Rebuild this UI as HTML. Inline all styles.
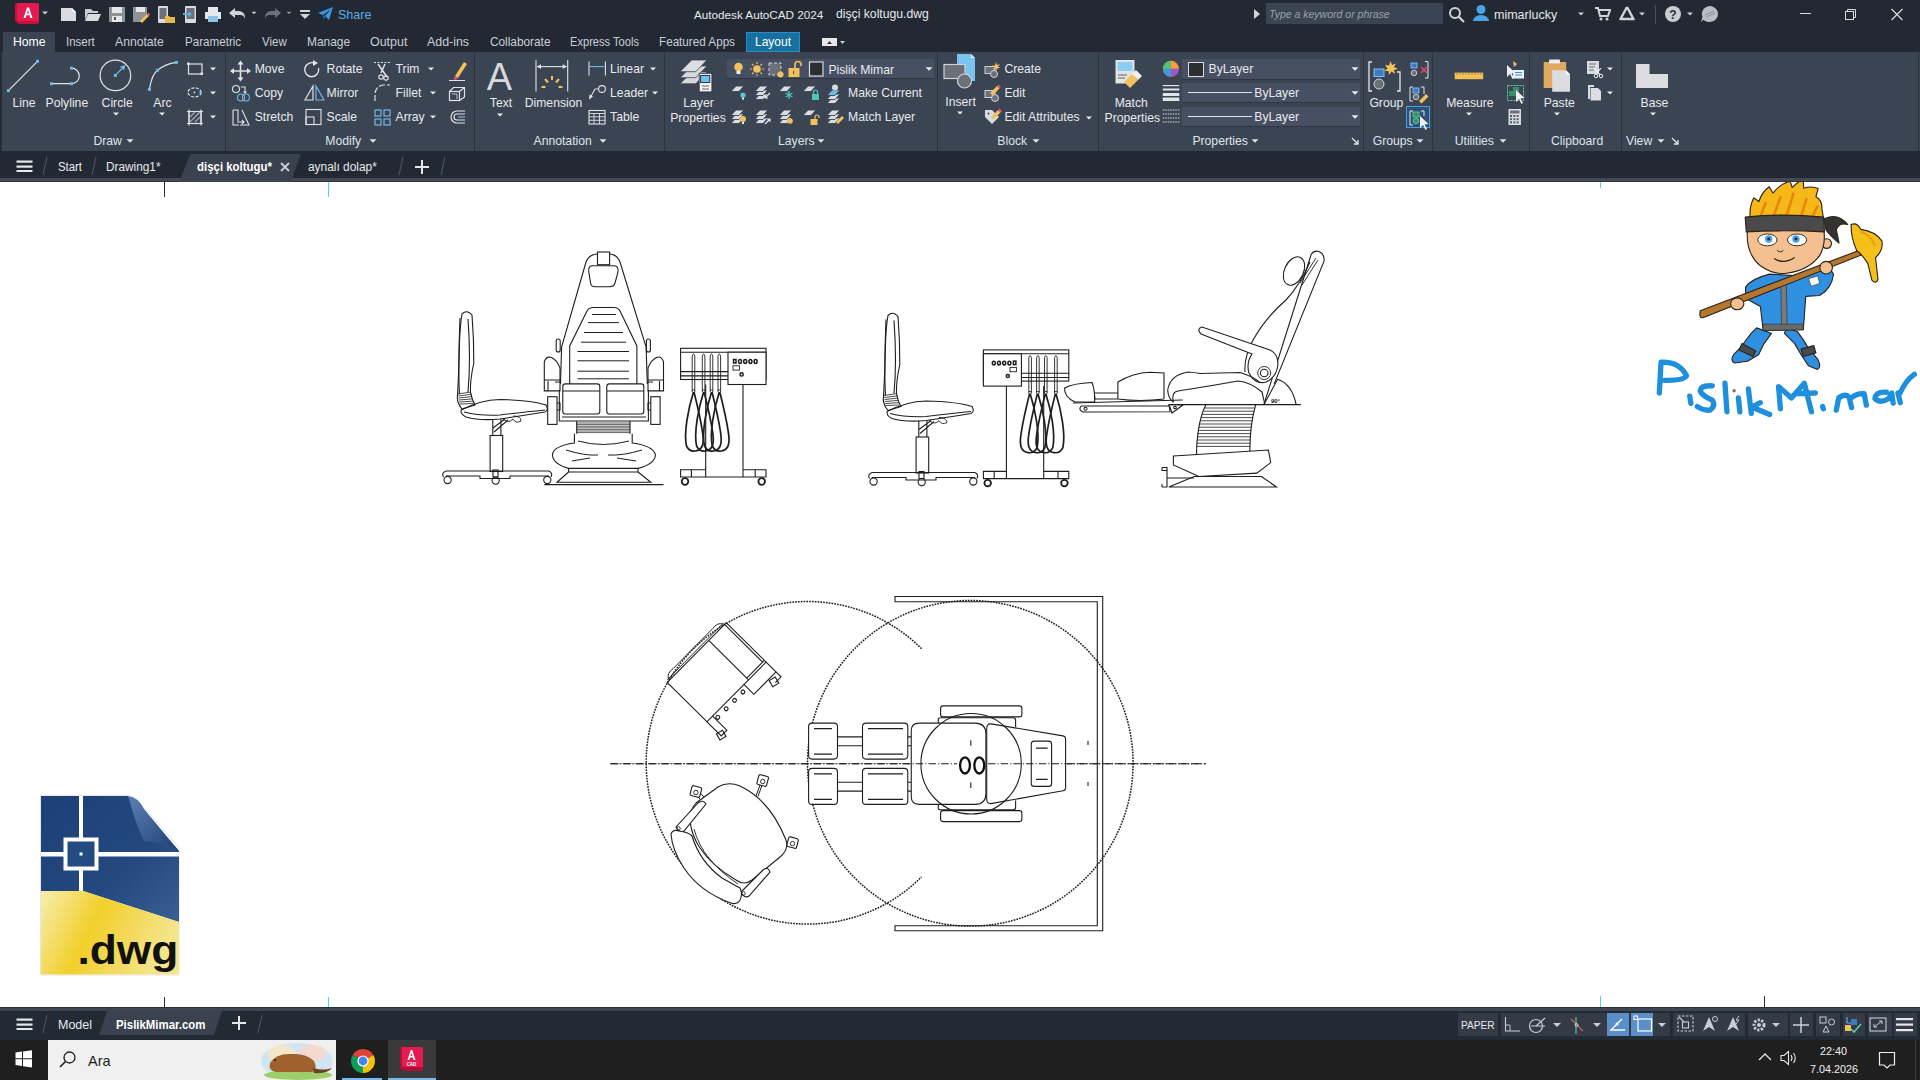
<!DOCTYPE html>
<html><head><meta charset="utf-8">
<style>
*{margin:0;padding:0;box-sizing:border-box}
html,body{width:1920px;height:1080px;overflow:hidden;background:#fff;font-family:"Liberation Sans",sans-serif}
.a{position:absolute;display:block}
.t{position:absolute;white-space:nowrap}
</style></head>
<body>
<div class="a" style="left:0px;top:0px;width:1920px;height:29px;background:#222933;"></div>
<div class="a" style="left:0px;top:29px;width:1920px;height:23px;background:#222933;"></div>
<div class="a" style="left:0px;top:52px;width:1920px;height:99px;background:#3b4453;"></div>
<div class="a" style="left:0px;top:151px;width:1920px;height:27px;background:#222933;"></div>
<div class="a" style="left:0px;top:178px;width:1920px;height:3px;background:#444a54;"></div>
<div class="a" style="left:0px;top:181px;width:1920px;height:1px;background:#30353e;"></div>
<div class="a" style="left:0px;top:182px;width:1920px;height:825px;background:#ffffff;"></div>
<div class="a" style="left:0px;top:1007px;width:1920px;height:1px;background:#2a303a;"></div>
<div class="a" style="left:0px;top:1008px;width:1920px;height:3px;background:#3f4551;"></div>
<div class="a" style="left:0px;top:1011px;width:1920px;height:29px;background:#222a33;"></div>
<div class="a" style="left:0px;top:1040px;width:1920px;height:40px;background:#1f1f1f;"></div>
<svg class="a" style="left:14px;top:2px;" width="26" height="24" viewBox="0 0 26 24"><path d="M3 1 H23 a2 2 0 0 1 2 2 V20 a2 2 0 0 1 -2 2 H5 L1 19 V3 a2 2 0 0 1 2 -2z" fill="#c8103f"/><path d="M3 1 H23 a2 2 0 0 1 2 2 V19 H5 a2 2 0 0 1 -2 -2z" fill="#e51a52"/><path d="M9.5 16 L13 5.5 H15 L18.5 16 H16.3 L15.5 13.3 H12.4 L11.6 16z M13 11.4 H15 L14 8z" fill="#fff"/></svg>
<svg class="a" style="left:40px;top:9px;" width="10" height="8" viewBox="0 0 10 8"><path d="M2 2.5 L8 2.5 L5 5.5 Z" fill="#c8ccd3"/></svg>
<svg class="a" style="left:60px;top:7px;" width="18" height="15" viewBox="0 0 18 15"><path d="M1 1 H12 L16 5 V14 H1z" fill="#d9dbdf"/><path d="M12 1 L16 5 H12z" fill="#f3f4f6"/></svg>
<svg class="a" style="left:84px;top:7px;" width="18" height="15" viewBox="0 0 18 15"><path d="M1 2 H7 L9 4 H14 V6 H4 L1 13z" fill="#c8cbd0"/><path d="M4 7 H17 L14 14 H1z" fill="#d9dbdf"/></svg>
<svg class="a" style="left:108px;top:6px;" width="18" height="17" viewBox="0 0 18 17"><path d="M1 1 H17 V16 H1z" fill="#8e939b"/><rect x="4" y="1" width="10" height="6" fill="#e6e7ea"/><rect x="4" y="10" width="10" height="6" fill="#e6e7ea"/><rect x="6" y="11" width="2" height="3" fill="#555"/></svg>
<svg class="a" style="left:132px;top:6px;" width="18" height="17" viewBox="0 0 18 17"><path d="M1 1 H15 V10 L9 16 H1z" fill="#8e939b"/><rect x="4" y="1" width="9" height="5" fill="#e6e7ea"/><path d="M8 15 L15 8 L17 10 L10 17z" fill="#f2c15a"/><path d="M15 8 L16.5 6.5 L18 8 L17 10z" fill="#e0556a"/></svg>
<svg class="a" style="left:157px;top:5px;" width="20" height="19" viewBox="0 0 20 19"><rect x="1" y="1" width="10" height="17" rx="1" fill="#d9dbdf"/><rect x="2.5" y="3" width="7" height="11" fill="#6b7079"/><path d="M8 11 H12 L13 12 H18 V18 H8z" fill="#e8b84a"/></svg>
<svg class="a" style="left:182px;top:5px;" width="16" height="19" viewBox="0 0 16 19"><rect x="3" y="1" width="11" height="17" rx="1" fill="#d9dbdf"/><rect x="4.5" y="3" width="8" height="11" fill="#6b7079"/><path d="M1 8 H7 V6 L10 9 L7 12 V10 H1z" fill="#5ab0e6"/></svg>
<svg class="a" style="left:204px;top:6px;" width="18" height="17" viewBox="0 0 18 17"><rect x="4" y="1" width="10" height="5" fill="#e6e7ea"/><rect x="1" y="6" width="16" height="7" fill="#e6e7ea"/><rect x="4" y="10" width="10" height="6" fill="#8fc3ea"/></svg>
<svg class="a" style="left:228px;top:7px;" width="18" height="14" viewBox="0 0 18 14"><path d="M1 6 L7 1 V4 H11 a6 6 0 0 1 6 6 V12 a5 5 0 0 0 -5 -4 H7 V11z" fill="#d0d3d8"/></svg>
<svg class="a" style="left:249px;top:9px;" width="10" height="8" viewBox="0 0 10 8"><path d="M2.5 2.75 L7.5 2.75 L5 5.25 Z" fill="#c8ccd3"/></svg>
<svg class="a" style="left:264px;top:7px;" width="18" height="14" viewBox="0 0 18 14"><path d="M17 6 L11 1 V4 H7 a6 6 0 0 0 -6 6 V12 a5 5 0 0 1 5 -4 H11 V11z" fill="#6b717b"/></svg>
<svg class="a" style="left:284px;top:9px;" width="10" height="8" viewBox="0 0 10 8"><path d="M2.5 2.75 L7.5 2.75 L5 5.25 Z" fill="#8a9099"/></svg>
<svg class="a" style="left:299px;top:7px;" width="12" height="14" viewBox="0 0 12 14"><rect x="1" y="3" width="10" height="2" fill="#d0d3d8"/><path d="M1 7 H11 L6 12z" fill="#d0d3d8"/></svg>
<svg class="a" style="left:317px;top:6px;" width="17" height="15" viewBox="0 0 17 15"><path d="M1 7 L16 1 L12 14 L8 10 L14 3 L6 9z" fill="#3d9ae0"/><path d="M6 9 L8 10 L7 14z" fill="#2a78b8"/></svg>
<div class="t" style="left:338px;top:8.52px;font-size:12.5px;line-height:12.5px;color:#5aaee8;font-weight:normal;">Share</div>
<div class="t" style="left:694px;top:8.70px;font-size:11.7px;line-height:11.7px;color:#e6e8ec;font-weight:normal;">Autodesk AutoCAD 2024</div>
<div class="t" style="left:836px;top:8.27px;font-size:12.2px;line-height:12.2px;color:#e6e8ec;font-weight:normal;">dişçi koltugu.dwg</div>
<svg class="a" style="left:1252px;top:8px;" width="10" height="12" viewBox="0 0 10 12"><path d="M2 1 L8 6 L2 11z" fill="#d0d3d8"/></svg>
<div class="a" style="left:1266px;top:3px;width:177px;height:21px;background:#3b4453;"></div>
<div class="t" style="left:1269px;top:9.37px;font-size:11.5px;line-height:11.5px;color:#9aa1ab;font-weight:normal;font-style:italic;transform:scaleX(0.9137);transform-origin:0 0;">Type a keyword or phrase</div>
<svg class="a" style="left:1448px;top:6px;" width="18" height="17" viewBox="0 0 18 17"><circle cx="7" cy="7" r="5" fill="none" stroke="#d0d3d8" stroke-width="2"/><path d="M10.5 10.5 L16 16" stroke="#d0d3d8" stroke-width="2.2"/></svg>
<svg class="a" style="left:1472px;top:4px;" width="18" height="18" viewBox="0 0 18 18"><circle cx="9" cy="5.5" r="4.5" fill="#4aa3e6"/><path d="M1 17 a8 6 0 0 1 16 0z" fill="#4aa3e6"/></svg>
<div class="t" style="left:1494px;top:9.02px;font-size:12.5px;line-height:12.5px;color:#e6e8ec;font-weight:normal;">mimarlucky</div>
<svg class="a" style="left:1576px;top:10px;" width="10" height="8" viewBox="0 0 10 8"><path d="M2 2.5 L8 2.5 L5 5.5 Z" fill="#c8ccd3"/></svg>
<svg class="a" style="left:1594px;top:6px;" width="17" height="15" viewBox="0 0 17 15"><path d="M1 2 H4 L6 10 H14 L16 4 H5" fill="none" stroke="#d0d3d8" stroke-width="2"/><circle cx="7" cy="13" r="1.5" fill="#d0d3d8"/><circle cx="13" cy="13" r="1.5" fill="#d0d3d8"/></svg>
<svg class="a" style="left:1618px;top:5px;" width="18" height="17" viewBox="0 0 18 17"><path d="M9 2 L2 15 M9 2 L16 15 M3 14 H15" fill="none" stroke="#d0d3d8" stroke-width="2.4"/></svg>
<svg class="a" style="left:1637px;top:10px;" width="10" height="8" viewBox="0 0 10 8"><path d="M2 2.5 L8 2.5 L5 5.5 Z" fill="#c8ccd3"/></svg>
<div class="a" style="left:1655px;top:5px;width:1px;height:19px;background:#4a515c;"></div>
<svg class="a" style="left:1664px;top:5px;" width="18" height="18" viewBox="0 0 18 18"><circle cx="9" cy="9" r="8" fill="#c9ccd1"/><text x="9" y="14" font-size="12" font-family="Liberation Sans" font-weight="bold" text-anchor="middle" fill="#2a2f38">?</text></svg>
<svg class="a" style="left:1685px;top:10px;" width="10" height="8" viewBox="0 0 10 8"><path d="M2 2.5 L8 2.5 L5 5.5 Z" fill="#c8ccd3"/></svg>
<svg class="a" style="left:1700px;top:5px;" width="19" height="18" viewBox="0 0 19 18"><path d="M9.5 1 a8.5 8 0 1 1 -6 13.7 L1 17 L2.5 12 A8.5 8 0 0 1 9.5 1z" fill="#b9bdc4"/><path d="M5 10 L14 6 M6 12 L15 8" stroke="#8a8f97" stroke-width="1"/></svg>
<div class="a" style="left:1800px;top:13px;width:11px;height:1px;background:#d8dbe0;"></div>
<svg class="a" style="left:1844px;top:8px;" width="14" height="13" viewBox="0 0 14 13"><rect x="1.5" y="3.5" width="8" height="8" fill="none" stroke="#d8dbe0" stroke-width="1"/><path d="M3.5 3.5 V1.5 H11.5 V9.5 H9.5" fill="none" stroke="#d8dbe0" stroke-width="1"/></svg>
<svg class="a" style="left:1890px;top:8px;" width="14" height="13" viewBox="0 0 14 13"><path d="M1.5 1 L12.5 12 M12.5 1 L1.5 12" stroke="#d8dbe0" stroke-width="1.2"/></svg>
<div class="a" style="left:3px;top:32px;width:52px;height:20px;background:#3b4453;"></div>
<div class="t" style="left:13.3px;top:35.93px;font-size:12.6px;line-height:12.6px;color:#ffffff;font-weight:normal;transform:scaleX(0.9699);transform-origin:0 0;">Home</div>
<div class="t" style="left:66px;top:35.93px;font-size:12.6px;line-height:12.6px;color:#c9ced6;font-weight:normal;transform:scaleX(0.9107);transform-origin:0 0;">Insert</div>
<div class="t" style="left:115.4px;top:35.93px;font-size:12.6px;line-height:12.6px;color:#c9ced6;font-weight:normal;transform:scaleX(0.9674);transform-origin:0 0;">Annotate</div>
<div class="t" style="left:184.6px;top:35.93px;font-size:12.6px;line-height:12.6px;color:#c9ced6;font-weight:normal;transform:scaleX(0.9226);transform-origin:0 0;">Parametric</div>
<div class="t" style="left:261.5px;top:35.93px;font-size:12.6px;line-height:12.6px;color:#c9ced6;font-weight:normal;transform:scaleX(0.9120);transform-origin:0 0;">View</div>
<div class="t" style="left:306.7px;top:35.93px;font-size:12.6px;line-height:12.6px;color:#c9ced6;font-weight:normal;transform:scaleX(0.9465);transform-origin:0 0;">Manage</div>
<div class="t" style="left:369.7px;top:35.93px;font-size:12.6px;line-height:12.6px;color:#c9ced6;font-weight:normal;transform:scaleX(0.9888);transform-origin:0 0;">Output</div>
<div class="t" style="left:427px;top:35.93px;font-size:12.6px;line-height:12.6px;color:#c9ced6;font-weight:normal;transform:scaleX(0.9831);transform-origin:0 0;">Add-ins</div>
<div class="t" style="left:489.5px;top:35.93px;font-size:12.6px;line-height:12.6px;color:#c9ced6;font-weight:normal;transform:scaleX(0.9388);transform-origin:0 0;">Collaborate</div>
<div class="t" style="left:570px;top:35.93px;font-size:12.6px;line-height:12.6px;color:#c9ced6;font-weight:normal;transform:scaleX(0.8823);transform-origin:0 0;">Express Tools</div>
<div class="t" style="left:659px;top:35.93px;font-size:12.6px;line-height:12.6px;color:#c9ced6;font-weight:normal;transform:scaleX(0.9273);transform-origin:0 0;">Featured Apps</div>
<div class="a" style="left:746px;top:32px;width:54px;height:20px;background:#17709f;border:1px solid #2a8cc0;"></div>
<div class="t" style="left:755px;top:35.93px;font-size:12.6px;line-height:12.6px;color:#ffffff;font-weight:normal;transform:scaleX(0.9516);transform-origin:0 0;">Layout</div>
<svg class="a" style="left:821px;top:37px;" width="24" height="10" viewBox="0 0 24 10"><rect x="1" y="1" width="15" height="8" fill="#e8e8e8"/><path d="M6 7 L8.5 4 L11 7z" fill="#333"/><path d="M19 4 H24 L21.5 7z" fill="#c8ccd3"/></svg>
<div class="a" style="left:225px;top:52px;width:1px;height:99px;background:#2c333e;"></div>
<div class="a" style="left:474px;top:52px;width:1px;height:99px;background:#2c333e;"></div>
<div class="a" style="left:664px;top:52px;width:1px;height:99px;background:#2c333e;"></div>
<div class="a" style="left:937px;top:52px;width:1px;height:99px;background:#2c333e;"></div>
<div class="a" style="left:1098px;top:52px;width:1px;height:99px;background:#2c333e;"></div>
<div class="a" style="left:1363px;top:52px;width:1px;height:99px;background:#2c333e;"></div>
<div class="a" style="left:1432px;top:52px;width:1px;height:99px;background:#2c333e;"></div>
<div class="a" style="left:1529px;top:52px;width:1px;height:99px;background:#2c333e;"></div>
<div class="a" style="left:1621px;top:52px;width:1px;height:99px;background:#2c333e;"></div>
<div class="a" style="left:1918px;top:52px;width:1px;height:99px;background:#2c333e;"></div>
<div class="t" style="left:93.4px;top:135.07px;font-size:12.2px;line-height:12.2px;color:#dfe3ea;font-weight:normal;">Draw</div>
<svg class="a" style="left:125.30000000000001px;top:136.5px;" width="10" height="8" viewBox="0 0 10 8"><path d="M1.5 2.25 L8.5 2.25 L5 5.75 Z" fill="#dfe3ea"/></svg>
<div class="t" style="left:325.3px;top:134.77px;font-size:12.2px;line-height:12.2px;color:#dfe3ea;font-weight:normal;">Modify</div>
<svg class="a" style="left:367.8px;top:136.5px;" width="10" height="8" viewBox="0 0 10 8"><path d="M1.5 2.25 L8.5 2.25 L5 5.75 Z" fill="#dfe3ea"/></svg>
<div class="t" style="left:533.5px;top:134.97px;font-size:12.2px;line-height:12.2px;color:#dfe3ea;font-weight:normal;">Annotation</div>
<svg class="a" style="left:598.1px;top:136.5px;" width="10" height="8" viewBox="0 0 10 8"><path d="M1.5 2.25 L8.5 2.25 L5 5.75 Z" fill="#dfe3ea"/></svg>
<div class="t" style="left:778px;top:134.87px;font-size:12.2px;line-height:12.2px;color:#dfe3ea;font-weight:normal;">Layers</div>
<svg class="a" style="left:816px;top:136.5px;" width="10" height="8" viewBox="0 0 10 8"><path d="M1.5 2.25 L8.5 2.25 L5 5.75 Z" fill="#dfe3ea"/></svg>
<div class="t" style="left:997.3px;top:135.07px;font-size:12.2px;line-height:12.2px;color:#dfe3ea;font-weight:normal;">Block</div>
<svg class="a" style="left:1031.2px;top:136.5px;" width="10" height="8" viewBox="0 0 10 8"><path d="M1.5 2.25 L8.5 2.25 L5 5.75 Z" fill="#dfe3ea"/></svg>
<div class="t" style="left:1192.4px;top:134.87px;font-size:12.2px;line-height:12.2px;color:#dfe3ea;font-weight:normal;">Properties</div>
<svg class="a" style="left:1250.1px;top:136.5px;" width="10" height="8" viewBox="0 0 10 8"><path d="M1.5 2.25 L8.5 2.25 L5 5.75 Z" fill="#dfe3ea"/></svg>
<svg class="a" style="left:1350.3px;top:136px;" width="10" height="10" viewBox="0 0 10 10"><path d="M2 2 L8 8 M8 4 V8 H4" fill="none" stroke="#dfe3ea" stroke-width="1.3"/></svg>
<div class="t" style="left:1372.7px;top:134.57px;font-size:12.2px;line-height:12.2px;color:#dfe3ea;font-weight:normal;">Groups</div>
<svg class="a" style="left:1415px;top:136.5px;" width="10" height="8" viewBox="0 0 10 8"><path d="M1.5 2.25 L8.5 2.25 L5 5.75 Z" fill="#dfe3ea"/></svg>
<div class="t" style="left:1454.7px;top:134.57px;font-size:12.2px;line-height:12.2px;color:#dfe3ea;font-weight:normal;">Utilities</div>
<svg class="a" style="left:1497.9px;top:136.5px;" width="10" height="8" viewBox="0 0 10 8"><path d="M1.5 2.25 L8.5 2.25 L5 5.75 Z" fill="#dfe3ea"/></svg>
<div class="t" style="left:1551px;top:134.57px;font-size:12.2px;line-height:12.2px;color:#dfe3ea;font-weight:normal;">Clipboard</div>
<div class="t" style="left:1626px;top:134.57px;font-size:12.2px;line-height:12.2px;color:#dfe3ea;font-weight:normal;">View</div>
<svg class="a" style="left:1655.9px;top:136.5px;" width="10" height="8" viewBox="0 0 10 8"><path d="M1.5 2.25 L8.5 2.25 L5 5.75 Z" fill="#dfe3ea"/></svg>
<svg class="a" style="left:1669.5px;top:136px;" width="10" height="10" viewBox="0 0 10 10"><path d="M2 2 L8 8 M8 4 V8 H4" fill="none" stroke="#dfe3ea" stroke-width="1.3"/></svg>
<svg class="a" style="left:0px;top:52px;" width="225" height="80" viewBox="0 0 225 80"><path d="M8.4 38.6 L37.5 9.3" stroke="#e0e3e8" stroke-width="1.2"/><rect x="6.9" y="37.1" width="3" height="3" fill="#6bbbe9"/><rect x="36.0" y="7.800000000000001" width="3" height="3" fill="#6bbbe9"/><path d="M51.5 31.7 H71.5 M71.5 16.2 A7.75 7.75 0 0 1 71.5 31.7" fill="none" stroke="#e0e3e8" stroke-width="1.2"/><rect x="50.0" y="30.2" width="3" height="3" fill="#6bbbe9"/><rect x="70.0" y="30.2" width="3" height="3" fill="#6bbbe9"/><rect x="70.0" y="14.7" width="3" height="3" fill="#6bbbe9"/><circle cx="115.4" cy="23.4" r="15.3" fill="none" stroke="#e0e3e8" stroke-width="1.2"/><path d="M115.4 23.4 L124 14.5" stroke="#6bbbe9" stroke-width="1.2"/><path d="M125.5 13 L120 14.5 L124 18.5z" fill="#6bbbe9"/><rect x="113.9" y="21.9" width="3" height="3" fill="#6bbbe9"/><path d="M149.4 37.4 Q152 22 157.5 18.3 Q165 12 176.4 10.4" fill="none" stroke="#e0e3e8" stroke-width="1.2"/><rect x="147.9" y="35.9" width="3" height="3" fill="#6bbbe9"/><rect x="156.0" y="16.8" width="3" height="3" fill="#6bbbe9"/><rect x="174.9" y="8.9" width="3" height="3" fill="#6bbbe9"/><rect x="188.5" y="12" width="13.5" height="10" fill="none" stroke="#e0e3e8" stroke-width="1.2"/><rect x="187" y="10.5" width="2.5" height="2.5" fill="#e0e3e8"/><rect x="200.5" y="20.5" width="2.5" height="2.5" fill="#e0e3e8"/><ellipse cx="194.5" cy="40.4" rx="6.5" ry="4.6" fill="none" stroke="#e0e3e8" stroke-width="1.2" stroke-dasharray="3 1.5"/><circle cx="194.5" cy="40.4" r="0.9" fill="#e0e3e8"/><rect x="199.5" y="39.2" width="2.5" height="2.5" fill="#6bbbe9"/><rect x="189" y="59.5" width="12" height="12" fill="none" stroke="#e0e3e8" stroke-width="1.2"/><path d="M187 59.5 H203 M187 71.5 H203 M189 57.5 V73.5 M201 57.5 V73.5" stroke="#e0e3e8" stroke-width="1.2"/><path d="M190 65 L195 60 M190 70 L200 60 M195 70 L200 65" stroke="#9aa1ab" stroke-width="1.5"/></svg>
<div class="t" style="left:12.6px;top:97.37px;font-size:12.2px;line-height:12.2px;color:#e8eaee;font-weight:normal;">Line</div>
<div class="t" style="left:45.5px;top:97.37px;font-size:12.2px;line-height:12.2px;color:#e8eaee;font-weight:normal;">Polyline</div>
<div class="t" style="left:101.6px;top:97.37px;font-size:12.2px;line-height:12.2px;color:#e8eaee;font-weight:normal;">Circle</div>
<div class="t" style="left:153.3px;top:97.37px;font-size:12.2px;line-height:12.2px;color:#e8eaee;font-weight:normal;">Arc</div>
<svg class="a" style="left:110.6px;top:110px;" width="10" height="8" viewBox="0 0 10 8"><path d="M2 2.5 L8 2.5 L5 5.5 Z" fill="#e8eaee"/></svg>
<svg class="a" style="left:156.6px;top:110px;" width="10" height="8" viewBox="0 0 10 8"><path d="M2 2.5 L8 2.5 L5 5.5 Z" fill="#e8eaee"/></svg>
<svg class="a" style="left:207.6px;top:65.4px;" width="10" height="8" viewBox="0 0 10 8"><path d="M2 2.5 L8 2.5 L5 5.5 Z" fill="#e8eaee"/></svg>
<svg class="a" style="left:207.6px;top:89px;" width="10" height="8" viewBox="0 0 10 8"><path d="M2 2.5 L8 2.5 L5 5.5 Z" fill="#e8eaee"/></svg>
<svg class="a" style="left:207.6px;top:113px;" width="10" height="8" viewBox="0 0 10 8"><path d="M2 2.5 L8 2.5 L5 5.5 Z" fill="#e8eaee"/></svg>
<svg class="a" style="left:225px;top:52px;" width="250" height="80" viewBox="0 0 250 80"><path d="M15.5 10 V28 M6.5 19 H24.5" stroke="#e0e3e8" stroke-width="1.6"/><path d="M15.5 8.5 L12.5 12.5 H18.5z M15.5 29.5 L12.5 25.5 H18.5z M5 19 L9 16 V22z M26 19 L22 16 V22z" fill="#e0e3e8"/><path d="M90 11.5 A7 7 0 1 0 93.5 16" fill="none" stroke="#e0e3e8" stroke-width="1.4"/><path d="M88 8 L93 11 L88 14z" fill="#e0e3e8"/><path d="M149 10.5 H166" stroke="#e0e3e8" stroke-width="1.2" stroke-dasharray="2 1.5"/><path d="M153 12 L162 25 M160 12 L156 21" stroke="#e0e3e8" stroke-width="1.5"/><circle cx="156" cy="25" r="2.2" fill="none" stroke="#e0e3e8" stroke-width="1.2"/><circle cx="161" cy="26" r="2.2" fill="none" stroke="#e0e3e8" stroke-width="1.2"/><path d="M230 24 L239 10 L242 12 L233 26z" fill="#f2c15a"/><path d="M230 24 L233 26 L231 28 L228.5 27z" fill="#e0556a"/><path d="M224 28.5 H240" stroke="#e0e3e8" stroke-width="1"/><circle cx="11" cy="37" r="3.5" fill="none" stroke="#e0e3e8" stroke-width="1.1"/><path d="M16 35 H20 V41" fill="none" stroke="#e0e3e8" stroke-width="1.1"/><path d="M18 39.5 L20 42 L22 39.5z" fill="#e0e3e8"/><circle cx="16" cy="45.5" r="3.5" fill="none" stroke="#74b9e6" stroke-width="1.1"/><circle cx="21" cy="45.5" r="3.5" fill="none" stroke="#74b9e6" stroke-width="1.1"/><path d="M80 48 L88 34 V48z" fill="none" stroke="#e0e3e8" stroke-width="1.2"/><path d="M91 34 L99 48 H91z" fill="none" stroke="#74b9e6" stroke-width="1.2"/><path d="M150 49 V42 A9 9 0 0 1 159 33 H165" fill="none" stroke="#e0e3e8" stroke-width="1.2" stroke-dasharray="6 2"/><rect x="224.5" y="39.5" width="10" height="9" fill="none" stroke="#e0e3e8" stroke-width="1.2"/><path d="M224.5 39.5 L228.5 35.5 H239.5 V45 L234.5 48.5 M234.5 39.5 L239.5 35.5" fill="none" stroke="#e0e3e8" stroke-width="1.2"/><path d="M227 42 H232 V47" fill="none" stroke="#e0e3e8" stroke-width="0.8"/><path d="M8 58 V73 H14 M8 58 H13 V69 M17 58 L24 73 H15" fill="none" stroke="#e0e3e8" stroke-width="1.1"/><path d="M12 70 H19 M17 68 L19 70 L17 72" fill="none" stroke="#e0e3e8" stroke-width="1.1"/><rect x="81" y="57.5" width="15" height="15" fill="none" stroke="#e0e3e8" stroke-width="1.1"/><rect x="81" y="65" width="8" height="7.5" fill="none" stroke="#e0e3e8" stroke-width="1.1"/><rect x="150" y="58" width="6" height="6" fill="none" stroke="#74b9e6" stroke-width="1.2"/><rect x="159" y="58" width="6" height="6" fill="none" stroke="#74b9e6" stroke-width="1.2"/><rect x="150" y="67" width="6" height="6" fill="none" stroke="#74b9e6" stroke-width="1.2"/><rect x="159" y="67" width="6" height="6" fill="none" stroke="#74b9e6" stroke-width="1.2"/><path d="M240 59 H232 A6 6 0 0 0 232 71 H240 M240 62 H232 A3 3 0 0 0 232 68 H240" fill="none" stroke="#e0e3e8" stroke-width="1.2"/><path d="M240 65 H233" stroke="#74b9e6" stroke-width="1.2"/></svg>
<div class="t" style="left:254.7px;top:63.07px;font-size:12.2px;line-height:12.2px;color:#e8eaee;font-weight:normal;">Move</div>
<div class="t" style="left:326.6px;top:63.07px;font-size:12.2px;line-height:12.2px;color:#e8eaee;font-weight:normal;">Rotate</div>
<div class="t" style="left:395.6px;top:63.07px;font-size:12.2px;line-height:12.2px;color:#e8eaee;font-weight:normal;">Trim</div>
<div class="t" style="left:254.7px;top:87.17px;font-size:12.2px;line-height:12.2px;color:#e8eaee;font-weight:normal;">Copy</div>
<div class="t" style="left:326.6px;top:87.17px;font-size:12.2px;line-height:12.2px;color:#e8eaee;font-weight:normal;">Mirror</div>
<div class="t" style="left:395.6px;top:87.17px;font-size:12.2px;line-height:12.2px;color:#e8eaee;font-weight:normal;">Fillet</div>
<div class="t" style="left:254.7px;top:111.27px;font-size:12.2px;line-height:12.2px;color:#e8eaee;font-weight:normal;">Stretch</div>
<div class="t" style="left:326.6px;top:111.27px;font-size:12.2px;line-height:12.2px;color:#e8eaee;font-weight:normal;">Scale</div>
<div class="t" style="left:395.6px;top:111.27px;font-size:12.2px;line-height:12.2px;color:#e8eaee;font-weight:normal;">Array</div>
<svg class="a" style="left:426.4px;top:65.2px;" width="10" height="8" viewBox="0 0 10 8"><path d="M2 2.5 L8 2.5 L5 5.5 Z" fill="#e8eaee"/></svg>
<svg class="a" style="left:428.3px;top:89.2px;" width="10" height="8" viewBox="0 0 10 8"><path d="M2 2.5 L8 2.5 L5 5.5 Z" fill="#e8eaee"/></svg>
<svg class="a" style="left:428.3px;top:113.2px;" width="10" height="8" viewBox="0 0 10 8"><path d="M2 2.5 L8 2.5 L5 5.5 Z" fill="#e8eaee"/></svg>
<div class="a" style="left:0px;top:52px;width:1.5px;height:99px;background:#262c36;"></div>
<svg class="a" style="left:474px;top:52px;" width="190" height="80" viewBox="0 0 190 80"><text x="25.5" y="38" font-family="Liberation Sans" font-size="38" fill="#d6d9de" text-anchor="middle">A</text><path d="M62 8 V39.5 M93.7 8 V39.5" stroke="#e0e3e8" stroke-width="1.1"/><path d="M63 14.6 H92.7" stroke="#e0e3e8" stroke-width="1.1"/><path d="M63 14.6 L67 12.3 V16.9z M92.7 14.6 L88.7 12.3 V16.9z" fill="#e0e3e8"/><path d="M78 24 V28 M71 27 L74 30.5 M85 27 L82 30.5 M67.5 35 H71.5 M84.5 35 H88.5" stroke="#f2c15a" stroke-width="2"/><path d="M115 9.5 V23.5 M131.4 9.5 V23.5" stroke="#e0e3e8" stroke-width="1.1"/><path d="M116 14.6 H130.4" stroke="#6bbbe9" stroke-width="1.1"/><circle cx="128" cy="37" r="3.4" fill="none" stroke="#e0e3e8" stroke-width="1.1"/><path d="M124.6 37 H121 L116 46" fill="none" stroke="#e0e3e8" stroke-width="1.1"/><path d="M115 47.5 L115.5 42.5 L119 44.5z" fill="#e0e3e8"/><rect x="115" y="58.5" width="16" height="13.5" fill="none" stroke="#e0e3e8" stroke-width="1.1"/><path d="M115 61.5 H131 M115 64.8 H131 M115 68.3 H131 M120 61.5 V72 M125.5 61.5 V72" stroke="#e0e3e8" stroke-width="0.9"/></svg>
<div class="t" style="left:489.8px;top:96.97px;font-size:12.2px;line-height:12.2px;color:#e8eaee;font-weight:normal;">Text</div>
<div class="t" style="left:524.7px;top:96.97px;font-size:12.2px;line-height:12.2px;color:#e8eaee;font-weight:normal;">Dimension</div>
<svg class="a" style="left:494.7px;top:110.5px;" width="10" height="8" viewBox="0 0 10 8"><path d="M2 2.5 L8 2.5 L5 5.5 Z" fill="#e8eaee"/></svg>
<div class="t" style="left:610.1px;top:63.07px;font-size:12.2px;line-height:12.2px;color:#e8eaee;font-weight:normal;">Linear</div>
<div class="t" style="left:610.1px;top:87.07px;font-size:12.2px;line-height:12.2px;color:#e8eaee;font-weight:normal;">Leader</div>
<div class="t" style="left:610.1px;top:111.02px;font-size:12.2px;line-height:12.2px;color:#e8eaee;font-weight:normal;">Table</div>
<svg class="a" style="left:647.5px;top:65.2px;" width="10" height="8" viewBox="0 0 10 8"><path d="M2 2.5 L8 2.5 L5 5.5 Z" fill="#e8eaee"/></svg>
<svg class="a" style="left:650.4px;top:89px;" width="10" height="8" viewBox="0 0 10 8"><path d="M2 2.5 L8 2.5 L5 5.5 Z" fill="#e8eaee"/></svg>
<div class="a" style="left:727px;top:59px;width:207px;height:20px;background:#465062;border-bottom:1px solid #2f3642;border-radius:1px;"></div>
<svg class="a" style="left:664px;top:52px;" width="273" height="80" viewBox="0 0 273 80"><path d="M16 31.8 L27.7 20 H43 L31.8 31.8z" fill="#d6d8dc" stroke="#3b4453" stroke-width="0.8"/><path d="M16 25.7 L27.7 14 H43 L31.8 25.7z" fill="#d6d8dc" stroke="#3b4453" stroke-width="0.8"/><path d="M16 19.7 L27.7 8 H43 L31.8 19.7z" fill="#dcdee2" stroke="#3b4453" stroke-width="0.8"/><rect x="35.2" y="21.3" width="12.7" height="18.6" fill="#f2f2f2" stroke="#2a303a" stroke-width="0.8"/><rect x="36.6" y="23.4" width="9.2" height="7.1" fill="#6cc0f5" stroke="#223" stroke-width="0.9"/><path d="M38 34 H45 M38 37 H45" stroke="#555" stroke-width="0.9"/><circle cx="74.5" cy="15" r="4.3" fill="#f2c15a"/><rect x="72.5" y="19" width="4" height="3" fill="#eee"/><circle cx="93" cy="17" r="3.8" fill="#f2c15a"/><path d="M93 10 V12 M93 22 V24 M86 17 H88 M98 17 H100 M88 12 L89.5 13.5 M98 12 L96.5 13.5 M88 22 L89.5 20.5 M98 22 L96.5 20.5" stroke="#f2c15a" stroke-width="1.1"/><rect x="105" y="11" width="12" height="12" fill="#6b7079" stroke="#d0d3d8" stroke-width="1" stroke-dasharray="3 2"/><circle cx="116.5" cy="22.5" r="3" fill="#f2c15a"/><rect x="124.5" y="16" width="11" height="9" fill="#f2c15a"/><path d="M131 16 V12.5 a3 3 0 0 1 6 0 V14" fill="none" stroke="#f2c15a" stroke-width="1.6"/><rect x="129" y="19" width="1.2" height="3" fill="#555"/><rect x="145.5" y="10" width="13.5" height="14" fill="#2a2d31" stroke="#d8dbe0" stroke-width="1.2"/><path d="M72 34 H80 L75 39.5 H67z" fill="#d8dbe0" stroke="#3b4453" stroke-width="0.9"/><circle cx="79" cy="43" r="2.6" fill="#58c8d8"/><rect x="78" y="45.5" width="2" height="2" fill="#eee"/><path d="M96 42 H104 L99 47.5 H91z" fill="#d8dbe0" stroke="#3b4453" stroke-width="0.9"/><path d="M96 38 H104 L99 43.5 H91z" fill="#d8dbe0" stroke="#3b4453" stroke-width="0.9"/><path d="M96 34 H104 L99 39.5 H91z" fill="#d8dbe0" stroke="#3b4453" stroke-width="0.9"/><path d="M106 41 L101 46 M101 43 V46 H104" fill="none" stroke="#eee" stroke-width="1.1"/><path d="M120 34 H128 L123 39.5 H115z" fill="#d8dbe0" stroke="#3b4453" stroke-width="0.9"/><path d="M125 39 V47 M121.5 41 L128.5 45 M121.5 45 L128.5 41" stroke="#4fc4b8" stroke-width="1.4"/><path d="M144 34 H152 L147 39.5 H139z" fill="#d8dbe0" stroke="#3b4453" stroke-width="0.9"/><rect x="148" y="42" width="7" height="6" fill="#4fc4b8"/><path d="M149.5 42 V40 a2 2 0 0 1 4 0 V42" fill="none" stroke="#4fc4b8" stroke-width="1.2"/><path d="M168 46 H176 L171 51.5 H163z" fill="#d8dbe0" stroke="#3b4453" stroke-width="0.9"/><path d="M168 42 H176 L171 47.5 H163z" fill="#d8dbe0" stroke="#3b4453" stroke-width="0.9"/><path d="M168 38 H176 L171 43.5 H163z" fill="#6bbbe9" stroke="#3b4453" stroke-width="0.9"/><circle cx="171" cy="35.5" r="3" fill="#d8dbe0"/><path d="M72 66 H80 L75 71.5 H67z" fill="#d8dbe0" stroke="#3b4453" stroke-width="0.9"/><path d="M72 62 H80 L75 67.5 H67z" fill="#d8dbe0" stroke="#3b4453" stroke-width="0.9"/><path d="M72 58 H80 L75 63.5 H67z" fill="#d8dbe0" stroke="#3b4453" stroke-width="0.9"/><circle cx="79" cy="67" r="3" fill="#f2c15a"/><rect x="78" y="70" width="2" height="2" fill="#eee"/><path d="M96 66 H104 L99 71.5 H91z" fill="#d8dbe0" stroke="#3b4453" stroke-width="0.9"/><path d="M96 62 H104 L99 67.5 H91z" fill="#d8dbe0" stroke="#3b4453" stroke-width="0.9"/><path d="M96 58 H104 L99 63.5 H91z" fill="#d8dbe0" stroke="#3b4453" stroke-width="0.9"/><path d="M101 72 L106 67 M103 67 H106 V70" fill="none" stroke="#eee" stroke-width="1.1"/><path d="M120 66 H128 L123 71.5 H115z" fill="#d8dbe0" stroke="#3b4453" stroke-width="0.9"/><path d="M120 62 H128 L123 67.5 H115z" fill="#d8dbe0" stroke="#3b4453" stroke-width="0.9"/><path d="M120 58 H128 L123 63.5 H115z" fill="#d8dbe0" stroke="#3b4453" stroke-width="0.9"/><circle cx="126" cy="69" r="2.8" fill="#f2c15a"/><path d="M144 58 H152 L147 63.5 H139z" fill="#d8dbe0" stroke="#3b4453" stroke-width="0.9"/><rect x="146.5" y="67" width="7" height="6" fill="#f2c15a"/><path d="M151 67 V65 a2 2 0 0 1 4 0 V66" fill="none" stroke="#f2c15a" stroke-width="1.2"/><path d="M168 66 H176 L171 71.5 H163z" fill="#d8dbe0" stroke="#3b4453" stroke-width="0.9"/><path d="M168 62 H176 L171 67.5 H163z" fill="#d8dbe0" stroke="#3b4453" stroke-width="0.9"/><path d="M168 58 H176 L171 63.5 H163z" fill="#d8dbe0" stroke="#3b4453" stroke-width="0.9"/><path d="M172 70 L178 64 L180 66 L174 72z" fill="#f2c15a"/></svg>
<div class="t" style="left:828.4px;top:64.17px;font-size:12.2px;line-height:12.2px;color:#e8eaee;font-weight:normal;">Pislik Mimar</div>
<svg class="a" style="left:924px;top:64.8px;" width="10" height="8" viewBox="0 0 10 8"><path d="M1.5 2.25 L8.5 2.25 L5 5.75 Z" fill="#e8eaee"/></svg>
<div class="t" style="left:683.3px;top:96.97px;font-size:12.2px;line-height:12.2px;color:#e8eaee;font-weight:normal;">Layer</div>
<div class="t" style="left:670.2px;top:111.57px;font-size:12.2px;line-height:12.2px;color:#e8eaee;font-weight:normal;">Properties</div>
<div class="t" style="left:848.1px;top:86.77px;font-size:12.2px;line-height:12.2px;color:#e8eaee;font-weight:normal;">Make Current</div>
<div class="t" style="left:848.1px;top:110.77px;font-size:12.2px;line-height:12.2px;color:#e8eaee;font-weight:normal;">Match Layer</div>
<svg class="a" style="left:937px;top:52px;" width="426" height="80" viewBox="0 0 426 80"><path d="M20 2 H34 L38 6 V29 H20z" fill="#7cc3f0"/><path d="M34 2 L38 6 H34z" fill="#d8ecfa"/><rect x="7" y="12.5" width="21" height="14" fill="#6b7079" stroke="#d0d3d8" stroke-width="1.2"/><circle cx="27.5" cy="29" r="7" fill="#6b7079" stroke="#d0d3d8" stroke-width="1.2"/><rect x="48" y="14.5" width="10" height="7" fill="#6b7079" stroke="#d0d3d8" stroke-width="1"/><circle cx="57" cy="22" r="3.5" fill="#6b7079" stroke="#d0d3d8" stroke-width="1"/><path d="M59 10 L60 13 L63 12 L61 14.5 L63.5 16 L60.5 16 L60 19 L58.5 16.5 L56 18 L57.5 15 L55 13.5 L58 13.5z" fill="#f2c15a"/><rect x="48" y="38.5" width="10" height="7" fill="#6b7079" stroke="#d0d3d8" stroke-width="1"/><circle cx="58" cy="46" r="3.5" fill="#6b7079" stroke="#d0d3d8" stroke-width="1"/><path d="M53 41 L60 34 L62.5 36.5 L55.5 43.5z" fill="#f2c15a"/><path d="M60 34 L61.5 32.5 L64 35 L62.5 36.5z" fill="#e0556a"/><path d="M48 58 H55 L62 65 L55 72 L48 65z" fill="#d8dbe0"/><circle cx="51.5" cy="61.5" r="1" fill="#3b4453"/><path d="M54 65 L61 58 L63.5 60.5 L56.5 67.5z" fill="#f2c15a"/><path d="M61 58 L62.5 56.5 L65 59 L63.5 60.5z" fill="#e0556a"/><rect x="178.5" y="8" width="19" height="23.5" fill="#e2e3e6"/><rect x="180.5" y="10" width="15" height="9" fill="#8ccdf2"/><path d="M181 23 H190 M181 26 H188" stroke="#555" stroke-width="0.9"/><path d="M187 30 L195 22 L201 28 L193 36z" fill="#f2c15a"/><path d="M195 22 L199 18 L205 24 L201 28z" fill="#eee"/><circle cx="233.8" cy="16.8" r="8" fill="#e8475c"/><path d="M233.8 16.8 L233.8 8.8 A8 8 0 0 1 241.8 16.8z" fill="#f5a23a"/><path d="M233.8 16.8 L241.8 16.8 A8 8 0 0 1 233.8 24.8z" fill="#9b59d0"/><path d="M233.8 16.8 L233.8 24.8 A8 8 0 0 1 225.8 16.8z" fill="#3f9be0"/><path d="M233.8 16.8 L225.8 16.8 A8 8 0 0 1 233.8 8.8z" fill="#52c47a"/><rect x="225.8" y="33" width="16.5" height="1.2" fill="#e0e3e8"/><rect x="225.8" y="36.5" width="16.5" height="2" fill="#e0e3e8"/><rect x="225.8" y="41" width="16.5" height="3" fill="#e0e3e8"/><rect x="225.8" y="45.5" width="16.5" height="3.5" fill="#e0e3e8"/><path d="M225.8 58 H242.3 M225.8 62 H242.3 M225.8 66 H242.3 M225.8 70 H242.3" stroke="#e0e3e8" stroke-width="1.2" stroke-dasharray="1.5 1"/></svg>
<div class="t" style="left:945.3px;top:96.17px;font-size:12.2px;line-height:12.2px;color:#e8eaee;font-weight:normal;">Insert</div>
<svg class="a" style="left:954.6px;top:109.4px;" width="10" height="8" viewBox="0 0 10 8"><path d="M2 2.5 L8 2.5 L5 5.5 Z" fill="#e8eaee"/></svg>
<div class="t" style="left:1004.4px;top:62.87px;font-size:12.2px;line-height:12.2px;color:#e8eaee;font-weight:normal;">Create</div>
<div class="t" style="left:1004.4px;top:87.27px;font-size:12.2px;line-height:12.2px;color:#e8eaee;font-weight:normal;">Edit</div>
<div class="t" style="left:1004.4px;top:111.17px;font-size:12.2px;line-height:12.2px;color:#e8eaee;font-weight:normal;">Edit Attributes</div>
<svg class="a" style="left:1084.2px;top:113.5px;" width="10" height="8" viewBox="0 0 10 8"><path d="M2 2.5 L8 2.5 L5 5.5 Z" fill="#e8eaee"/></svg>
<div class="t" style="left:1114.7px;top:96.97px;font-size:12.2px;line-height:12.2px;color:#e8eaee;font-weight:normal;">Match</div>
<div class="t" style="left:1104.5px;top:111.57px;font-size:12.2px;line-height:12.2px;color:#e8eaee;font-weight:normal;">Properties</div>
<div class="a" style="left:1181.8px;top:59px;width:178.3px;height:20.5px;background:#465062;border-bottom:1px solid #2f3642;"></div>
<div class="a" style="left:1181.8px;top:82.5px;width:178.3px;height:20.5px;background:#465062;border-bottom:1px solid #2f3642;"></div>
<div class="a" style="left:1181.8px;top:106.5px;width:178.3px;height:20.5px;background:#465062;border-bottom:1px solid #2f3642;"></div>
<div class="a" style="left:1188px;top:61.5px;width:15.5px;height:15.5px;background:#2a2d31;border:1.2px solid #d8dbe0;"></div>
<div class="t" style="left:1208.5px;top:62.67px;font-size:12.2px;line-height:12.2px;color:#e8eaee;font-weight:normal;">ByLayer</div>
<div class="a" style="left:1188.3px;top:92px;width:63.5px;height:1px;background:#e0e3e8;"></div>
<div class="t" style="left:1254.3px;top:86.77px;font-size:12.2px;line-height:12.2px;color:#e8eaee;font-weight:normal;">ByLayer</div>
<div class="a" style="left:1188.3px;top:116.3px;width:63.5px;height:1px;background:#e0e3e8;"></div>
<div class="t" style="left:1254.3px;top:110.77px;font-size:12.2px;line-height:12.2px;color:#e8eaee;font-weight:normal;">ByLayer</div>
<svg class="a" style="left:1349.6px;top:64.8px;" width="10" height="8" viewBox="0 0 10 8"><path d="M1.5 2.25 L8.5 2.25 L5 5.75 Z" fill="#e8eaee"/></svg>
<svg class="a" style="left:1349.6px;top:88.9px;" width="10" height="8" viewBox="0 0 10 8"><path d="M1.5 2.25 L8.5 2.25 L5 5.75 Z" fill="#e8eaee"/></svg>
<svg class="a" style="left:1349.6px;top:112.9px;" width="10" height="8" viewBox="0 0 10 8"><path d="M1.5 2.25 L8.5 2.25 L5 5.75 Z" fill="#e8eaee"/></svg>
<div class="a" style="left:1406px;top:106px;width:24px;height:22px;background:#2f4f75;border:1px solid #4a9fe0;"></div>
<svg class="a" style="left:1363px;top:52px;" width="320" height="80" viewBox="0 0 320 80"><path d="M9 10 H6 V39 H9 M34 20 H37 V39 H34" fill="none" stroke="#e6e8ec" stroke-width="1.3"/><rect x="11" y="17" width="10" height="7.5" fill="#3e7bbf" stroke="#7cc3f0" stroke-width="1"/><circle cx="16" cy="32" r="5" fill="#6b7079" stroke="#d0d3d8" stroke-width="1"/><path d="M27.5 9 L29 13 L33 11.5 L31 15 L35 17 L31 18 L32 22 L28.5 19.5 L26 23 L25.5 19 L21.5 19 L24.5 16.5 L22 13 L26 13.5z" fill="#f2c15a"/><path d="M62 9.5 H65 V26 H62" fill="none" stroke="#e6e8ec" stroke-width="1"/><rect x="48" y="11" width="6" height="5" fill="#3e7bbf" stroke="#7cc3f0" stroke-width="0.9"/><circle cx="51" cy="21" r="2.8" fill="#6b7079" stroke="#d0d3d8" stroke-width="0.9"/><path d="M58 15 L64 21 M64 15 L58 21" stroke="#e8475c" stroke-width="1.6"/><path d="M50 35 H47 V49 H50 M58 35 H61 V42" fill="none" stroke="#e6e8ec" stroke-width="1"/><rect x="50" y="36" width="6" height="5" fill="#3e7bbf" stroke="#7cc3f0" stroke-width="0.9"/><circle cx="53" cy="45" r="2.8" fill="#6b7079" stroke="#d0d3d8" stroke-width="0.9"/><path d="M56 49 L63 42 L65.5 44.5 L58.5 51.5z" fill="#f2c15a"/><path d="M50 59 H47 V73 H50 M58 59 H61 V64" fill="none" stroke="#e6e8ec" stroke-width="1"/><rect x="50" y="60" width="6" height="5" fill="#3a8f68" stroke="#5ed0a0" stroke-width="0.9"/><circle cx="53" cy="69" r="2.8" fill="#3a8f68" stroke="#5ed0a0" stroke-width="0.9"/><path d="M57 64 L57 76 L60 73 L62.5 78 L64 77 L61.5 72.5 L65.5 72z" fill="#f0f0f0"/><rect x="91.7" y="20.6" width="28.5" height="6.6" fill="#f2c15a"/><path d="M94 20.6 V23 M97 20.6 V22.5 M100 20.6 V23 M103 20.6 V22.5 M106 20.6 V23 M109 20.6 V22.5 M112 20.6 V23 M115 20.6 V22.5 M118 20.6 V23" stroke="#8a6a20" stroke-width="0.7"/><path d="M144 13 L144 25 L147 22 L149.5 27 L151 26 L148.5 21.5 L152.5 21z" fill="#f0f0f0"/><rect x="150" y="18" width="11" height="8.5" fill="#e6f3fb"/><path d="M152 20.5 H159 M152 23 H159" stroke="#3e7bbf" stroke-width="0.9"/><path d="M150 9 L154 12 L151 15z" fill="#f2c15a"/><rect x="144.5" y="33.5" width="16" height="15" fill="none" stroke="#5ed0a0" stroke-width="1" stroke-dasharray="2 1"/><path d="M146 44 V39 H150 V35 H156 V44z" fill="#3a8f68"/><path d="M153 38 L153 50 L156 47 L158.5 52 L160 51 L157.5 46.5 L161.5 46z" fill="#f0f0f0"/><rect x="145.5" y="57" width="12.5" height="16" fill="#d8dbe0"/><rect x="147" y="58.5" width="9.5" height="3" fill="#6b7079"/><rect x="147.0" y="63.0" width="2" height="2" fill="#555b65"/><rect x="147.0" y="66.2" width="2" height="2" fill="#555b65"/><rect x="147.0" y="69.4" width="2" height="2" fill="#555b65"/><rect x="150.3" y="63.0" width="2" height="2" fill="#555b65"/><rect x="150.3" y="66.2" width="2" height="2" fill="#555b65"/><rect x="150.3" y="69.4" width="2" height="2" fill="#555b65"/><rect x="153.6" y="63.0" width="2" height="2" fill="#555b65"/><rect x="153.6" y="66.2" width="2" height="2" fill="#555b65"/><rect x="153.6" y="69.4" width="2" height="2" fill="#555b65"/><rect x="180.7" y="10" width="22.5" height="26" fill="#e0a860"/><rect x="186" y="7.5" width="11" height="4" rx="1" fill="#eee"/><path d="M189.2 18.3 H203 L207 22.3 V39.8 H189.2z" fill="#dcdde0"/><path d="M203 18.3 L207 22.3 H203z" fill="#fff"/><path d="M224 9 H236 V22 H224z" fill="#d8dbe0"/><path d="M226 12 H233 M226 15 H232 M226 18 H231" stroke="#6b7079" stroke-width="1"/><path d="M231 16 L237 23 M238 16 L234 21" stroke="#eee" stroke-width="1.2"/><circle cx="233" cy="24" r="1.8" fill="none" stroke="#eee" stroke-width="1"/><circle cx="238" cy="24" r="1.8" fill="none" stroke="#eee" stroke-width="1"/><path d="M225 33 H231 V35 H227 V47 H225z" fill="#d8dbe0"/><path d="M227.5 36 H235 L238 39 V48.5 H227.5z" fill="#dcdde0"/><path d="M273 12 H286.5 V22 H305 V36 H273z" fill="#dcdde0"/></svg>
<div class="t" style="left:1369.4px;top:96.67px;font-size:12.2px;line-height:12.2px;color:#e8eaee;font-weight:normal;">Group</div>
<div class="t" style="left:1446.2px;top:97.07px;font-size:12.2px;line-height:12.2px;color:#e8eaee;font-weight:normal;">Measure</div>
<svg class="a" style="left:1463.5px;top:110px;" width="10" height="8" viewBox="0 0 10 8"><path d="M2 2.5 L8 2.5 L5 5.5 Z" fill="#e8eaee"/></svg>
<div class="t" style="left:1543.7px;top:97.07px;font-size:12.2px;line-height:12.2px;color:#e8eaee;font-weight:normal;">Paste</div>
<svg class="a" style="left:1552.3px;top:110px;" width="10" height="8" viewBox="0 0 10 8"><path d="M2 2.5 L8 2.5 L5 5.5 Z" fill="#e8eaee"/></svg>
<svg class="a" style="left:1605.3px;top:65.3px;" width="10" height="8" viewBox="0 0 10 8"><path d="M2 2.5 L8 2.5 L5 5.5 Z" fill="#e8eaee"/></svg>
<svg class="a" style="left:1605.3px;top:89.2px;" width="10" height="8" viewBox="0 0 10 8"><path d="M2 2.5 L8 2.5 L5 5.5 Z" fill="#e8eaee"/></svg>
<div class="t" style="left:1640.5px;top:97.07px;font-size:12.2px;line-height:12.2px;color:#e8eaee;font-weight:normal;">Base</div>
<svg class="a" style="left:1647.5px;top:110px;" width="10" height="8" viewBox="0 0 10 8"><path d="M2 2.5 L8 2.5 L5 5.5 Z" fill="#e8eaee"/></svg>
<svg class="a" style="left:15.5px;top:160px;" width="17" height="12" viewBox="0 0 17 12"><rect x="0.5" y="0.5" width="16" height="2.2" fill="#e6e8ec"/><rect x="0.5" y="5.5" width="16" height="2.2" fill="#e6e8ec"/><rect x="0.5" y="10" width="16" height="2.2" fill="#e6e8ec"/></svg>
<svg class="a" style="left:41px;top:157px;" width="8" height="18" viewBox="0 0 8 18"><path d="M6 0 L2 18" stroke="#4a525e" stroke-width="1.2"/></svg>
<div class="t" style="left:58px;top:160.52px;font-size:12.5px;line-height:12.5px;color:#e8eaee;font-weight:normal;transform:scaleX(0.9091);transform-origin:0 0;">Start</div>
<svg class="a" style="left:90px;top:157px;" width="8" height="18" viewBox="0 0 8 18"><path d="M6 0 L2 18" stroke="#4a525e" stroke-width="1.2"/></svg>
<div class="t" style="left:106.3px;top:160.52px;font-size:12.5px;line-height:12.5px;color:#e8eaee;font-weight:normal;transform:scaleX(0.9451);transform-origin:0 0;">Drawing1*</div>
<svg class="a" style="left:180px;top:154px;" width="122" height="28" viewBox="0 0 122 28"><path d="M10.4 0 H120.7 L112.4 24 V28 H0.6 V24z" fill="#3a424f"/></svg>
<div class="t" style="left:197.2px;top:160.52px;font-size:12.5px;line-height:12.5px;color:#ffffff;font-weight:bold;transform:scaleX(0.9152);transform-origin:0 0;">dişçi koltugu*</div>
<svg class="a" style="left:280px;top:162px;" width="10" height="10" viewBox="0 0 10 10"><path d="M1 1 L9 9 M9 1 L1 9" stroke="#c9ced6" stroke-width="1.8"/></svg>
<div class="t" style="left:308.2px;top:160.52px;font-size:12.5px;line-height:12.5px;color:#e8eaee;font-weight:normal;transform:scaleX(0.9519);transform-origin:0 0;">aynalı dolap*</div>
<svg class="a" style="left:397px;top:157px;" width="8" height="18" viewBox="0 0 8 18"><path d="M6 0 L2 18" stroke="#4a525e" stroke-width="1.2"/></svg>
<svg class="a" style="left:414px;top:159px;" width="16" height="16" viewBox="0 0 16 16"><path d="M8 1 V15 M1 8 H15" stroke="#e6e8ec" stroke-width="2"/></svg>
<svg class="a" style="left:439px;top:157px;" width="8" height="18" viewBox="0 0 8 18"><path d="M6 0 L2 18" stroke="#4a525e" stroke-width="1.2"/></svg>
<div class="a" style="left:164px;top:182px;width:1.2px;height:15px;background:#2a2a2a;"></div>
<div class="a" style="left:328px;top:182px;width:1.2px;height:15px;background:#4fd8d8;"></div>
<div class="a" style="left:1600px;top:182px;width:1.2px;height:6px;background:#4fd8d8;"></div>
<div class="a" style="left:164px;top:997px;width:1.2px;height:10px;background:#2a2a2a;"></div>
<div class="a" style="left:328px;top:997px;width:1.2px;height:10px;background:#4fd8d8;"></div>
<div class="a" style="left:1600px;top:996px;width:1.2px;height:11px;background:#4fd8d8;"></div>
<div class="a" style="left:1764px;top:996px;width:1.2px;height:11px;background:#2a2a2a;"></div>
<svg class="a" style="left:15.5px;top:1018px;" width="17" height="12" viewBox="0 0 17 12"><rect x="0.5" y="0.5" width="16" height="2.2" fill="#e6e8ec"/><rect x="0.5" y="5.5" width="16" height="2.2" fill="#e6e8ec"/><rect x="0.5" y="10" width="16" height="2.2" fill="#e6e8ec"/></svg>
<svg class="a" style="left:41px;top:1015px;" width="8" height="18" viewBox="0 0 8 18"><path d="M6 0 L2 18" stroke="#4a525e" stroke-width="1.2"/></svg>
<div class="t" style="left:58px;top:1018.52px;font-size:12.5px;line-height:12.5px;color:#e8eaee;font-weight:normal;transform:scaleX(0.9986);transform-origin:0 0;">Model</div>
<svg class="a" style="left:99px;top:1011px;" width="126" height="24" viewBox="0 0 126 24"><path d="M8 0 H123 L115 24 H0z" fill="#3a424f"/></svg>
<div class="t" style="left:116px;top:1018.52px;font-size:12.5px;line-height:12.5px;color:#ffffff;font-weight:bold;transform:scaleX(0.9136);transform-origin:0 0;">PislikMimar.com</div>
<svg class="a" style="left:231px;top:1015px;" width="16" height="16" viewBox="0 0 16 16"><path d="M8 1 V15 M1 8 H15" stroke="#e6e8ec" stroke-width="2"/></svg>
<svg class="a" style="left:256px;top:1015px;" width="8" height="18" viewBox="0 0 8 18"><path d="M6 0 L2 18" stroke="#4a525e" stroke-width="1.2"/></svg>
<div class="a" style="left:1458px;top:1013px;width:39.5px;height:23px;background:#343b47;"></div>
<div class="t" style="left:1461.3px;top:1019.67px;font-size:11.5px;line-height:11.5px;color:#e6e8ec;font-weight:normal;transform:scaleX(0.8837);transform-origin:0 0;">PAPER</div>
<div class="a" style="left:1501px;top:1013px;width:168.5px;height:23px;background:#343b47;"></div>
<svg class="a" style="left:1501px;top:1011px;" width="170" height="28" viewBox="0 0 170 28"><path d="M4.5 6 V20 H19" fill="none" stroke="#c9ced6" stroke-width="1.1"/><path d="M4.5 14 H9 V20" fill="none" stroke="#c9ced6" stroke-width="0.9"/><circle cx="35" cy="15" r="6.5" fill="none" stroke="#c9ced6" stroke-width="1.2"/><path d="M35 15 L44 7" stroke="#c9ced6" stroke-width="1.2"/><path d="M30 15 H44" stroke="#c9ced6" stroke-width="1"/><path d="M52 12 H60 L56 16z" fill="#c9ced6"/><path d="M70 8 L82 20" stroke="#e0556a" stroke-width="1.1"/><path d="M75 6 V23" stroke="#5ed0a0" stroke-width="1.1"/><circle cx="75.5" cy="14" r="1.5" fill="none" stroke="#c9ced6"/><path d="M92 12 H100 L96 16z" fill="#c9ced6"/></svg>
<div class="a" style="left:1607px;top:1013px;width:21.75px;height:23px;background:#5a8fc8;"></div>
<div class="a" style="left:1630.75px;top:1013px;width:22.25px;height:23px;background:#5a8fc8;"></div>
<svg class="a" style="left:1607px;top:1011px;" width="66" height="28" viewBox="0 0 66 28"><path d="M3 19 H18 M4 19 L15 8" stroke="#fff" stroke-width="1.3"/><circle cx="10" cy="13" r="1.5" fill="#fff"/><rect x="31" y="8" width="13.5" height="12" fill="none" stroke="#fff" stroke-width="1.2"/><rect x="27" y="5" width="3.5" height="3.5" fill="none" stroke="#fff" stroke-width="1"/><path d="M51 12 H59 L55 16z" fill="#c9ced6"/></svg>
<div class="a" style="left:1673px;top:1013px;width:71.5px;height:23px;background:#343b47;"></div>
<div class="a" style="left:1748px;top:1013px;width:39.5px;height:23px;background:#343b47;"></div>
<div class="a" style="left:1789.5px;top:1013px;width:23.5px;height:23px;background:#343b47;"></div>
<div class="a" style="left:1815.5px;top:1013px;width:24.5px;height:23px;background:#343b47;"></div>
<div class="a" style="left:1842.5px;top:1013px;width:22.5px;height:23px;background:#343b47;"></div>
<div class="a" style="left:1868px;top:1013px;width:24px;height:23px;background:#343b47;"></div>
<div class="a" style="left:1893.75px;top:1013px;width:23.25px;height:23px;background:#343b47;"></div>
<svg class="a" style="left:1673px;top:1011px;" width="250" height="28" viewBox="0 0 250 28"><rect x="5" y="5" width="15" height="15" fill="none" stroke="#c9ced6" stroke-width="1.1" stroke-dasharray="2.5 1.5"/><rect x="9.5" y="11" width="6" height="6" fill="none" stroke="#c9ced6" stroke-width="1.1"/><path d="M6 6 L11 11" stroke="#c9ced6" stroke-width="1.1"/><path d="M36 6 L30 20 L36 16 L42 20z" fill="#c9ced6"/><circle cx="42" cy="8" r="2.5" fill="none" stroke="#c9ced6" stroke-width="1"/><path d="M60 6 L54 20 L60 16 L66 20z" fill="#c9ced6"/><path d="M66 5 L63 9 H66 L63 13" fill="none" stroke="#c9ced6" stroke-width="1"/><circle cx="86" cy="14" r="5" fill="none" stroke="#c9ced6" stroke-width="3" stroke-dasharray="2.2 1.4"/><circle cx="86" cy="14" r="2" fill="#c9ced6"/><path d="M99 12 H107 L103 16z" fill="#c9ced6"/><path d="M128 6 V22 M120 14 H136" stroke="#c9ced6" stroke-width="1.5"/><rect x="147" y="6" width="6" height="6" fill="none" stroke="#c9ced6" stroke-width="1"/><circle cx="158.5" cy="11" r="3" fill="none" stroke="#c9ced6" stroke-width="1"/><path d="M150 21 L153 15 L156 21z" fill="none" stroke="#c9ced6" stroke-width="1"/><path d="M174 6 V12 H184" fill="none" stroke="#5ab0e6" stroke-width="1.2"/><rect x="172" y="14" width="6" height="6" fill="#f2c15a"/><path d="M178 18 L181 21 L188 13" fill="none" stroke="#5ed0a0" stroke-width="1.6"/><rect x="178" y="8" width="6" height="6" fill="#3e7bbf"/><rect x="197" y="7" width="16" height="13" fill="none" stroke="#c9ced6" stroke-width="1.1"/><path d="M201 16 L209 10 M206 10 H209 V13 M201 13 V16 H204" fill="none" stroke="#c9ced6" stroke-width="1"/><rect x="223" y="7" width="17" height="2.2" fill="#e6e8ec"/><rect x="223" y="12.5" width="17" height="2.2" fill="#e6e8ec"/><rect x="223" y="18" width="17" height="2.2" fill="#e6e8ec"/></svg>
<svg class="a" style="left:15px;top:1050px;" width="18" height="18" viewBox="0 0 18 18"><path d="M0.5 2.5 L7 1.6 V8.3 H0.5z M8 1.4 L17 0.2 V8.3 H8z M0.5 9.3 H7 V16 L0.5 15.1z M8 9.3 H17 V17.4 L8 16.2z" fill="#ffffff"/></svg>
<div class="a" style="left:48px;top:1040px;width:288px;height:40px;background:#f0f0f0;"></div>
<svg class="a" style="left:58px;top:1050px;" width="20" height="20" viewBox="0 0 20 20"><circle cx="11.5" cy="7.5" r="5.5" fill="none" stroke="#1e1e1e" stroke-width="1.3"/><path d="M7.5 11.5 L2 17" stroke="#1e1e1e" stroke-width="1.6"/></svg>
<div class="t" style="left:88px;top:1054.33px;font-size:14.5px;line-height:14.5px;color:#1e1e1e;font-weight:normal;">Ara</div>
<svg class="a" style="left:258px;top:1041px;" width="78" height="39" viewBox="0 0 78 39"><ellipse cx="39" cy="20" rx="36" ry="18" fill="#cfe6f2"/><ellipse cx="24" cy="13" rx="14" ry="9" fill="#f3e7c9"/><ellipse cx="54" cy="12" rx="14" ry="8" fill="#f5d9d0"/><ellipse cx="40" cy="34" rx="34" ry="5" fill="#9ccf6a"/><path d="M12 22 Q18 12 34 13 Q48 12 56 20 Q60 28 54 31 H18 Q10 30 12 22z" fill="#a0612e"/><path d="M55 27 Q66 30 74 27 Q70 33 56 32z" fill="#6e4020"/><circle cx="17" cy="19" r="1" fill="#222"/></svg>
<svg class="a" style="left:350px;top:1048px;" width="26" height="26" viewBox="0 0 26 26"><path d="M13 13 L2.61 7.00 A12 12 0 0 1 23.39 7.00z" fill="#db4437"/><path d="M13 13 L23.39 7.00 A12 12 0 0 1 13.00 25.00z" fill="#f4c20d"/><path d="M13 13 L13.00 25.00 A12 12 0 0 1 2.61 7.00z" fill="#0f9d58"/><circle cx="13" cy="13" r="5.6" fill="#fff"/><circle cx="13" cy="13" r="4.4" fill="#4285f4"/></svg>
<div class="a" style="left:342px;top:1078px;width:40px;height:2px;background:#76b9ed;"></div>
<div class="a" style="left:387.5px;top:1040px;width:48.5px;height:40px;background:#3a3a3a;"></div>
<div class="a" style="left:387.5px;top:1078px;width:48.5px;height:2px;background:#76b9ed;"></div>
<svg class="a" style="left:399px;top:1046px;" width="25" height="28" viewBox="0 0 25 28"><path d="M3 1 H22 a2 2 0 0 1 2 2 V23 a2 2 0 0 1 -2 2 H5 L1 22 V3 a2 2 0 0 1 2 -2z" fill="#b50d3a"/><path d="M3 1 H22 a2 2 0 0 1 2 2 V21 H5 a2 2 0 0 1 -2 -2z" fill="#e51a52"/><path d="M8.5 14 L11.8 4 H13.2 L16.5 14 H14.6 L13.9 11.6 H11.1 L10.4 14z M11.6 10 H13.4 L12.5 7z" fill="#fff"/><text x="12.5" y="20" font-family="Liberation Sans" font-size="4.5" font-weight="bold" fill="#fff" text-anchor="middle">CAD</text></svg>
<svg class="a" style="left:1758px;top:1052px;" width="14" height="10" viewBox="0 0 14 10"><path d="M1 8 L7 2 L13 8" fill="none" stroke="#e6e6e6" stroke-width="1.3"/></svg>
<svg class="a" style="left:1780px;top:1050px;" width="18" height="16" viewBox="0 0 18 16"><path d="M1 5.5 H4 L8.5 1.5 V14.5 L4 10.5 H1z" fill="none" stroke="#e6e6e6" stroke-width="1.1"/><path d="M11 5 Q13 8 11 11 M13.5 3 Q17 8 13.5 13" fill="none" stroke="#e6e6e6" stroke-width="1.1"/></svg>
<div class="t" style="left:1820px;top:1045.61px;font-size:11.8px;line-height:11.8px;color:#f0f0f0;font-weight:normal;transform:scaleX(0.9143);transform-origin:0 0;">22:40</div>
<div class="t" style="left:1810px;top:1063.61px;font-size:11.8px;line-height:11.8px;color:#f0f0f0;font-weight:normal;transform:scaleX(0.9144);transform-origin:0 0;">7.04.2026</div>
<svg class="a" style="left:1877px;top:1050px;" width="20" height="20" viewBox="0 0 20 20"><path d="M2.5 2.5 H17.5 V15 H13 L10 18 L7 15 H2.5z" fill="none" stroke="#f0f0f0" stroke-width="1.2"/></svg>
<div class="a" style="left:1915px;top:1040px;width:1px;height:40px;background:#3a3a3a;"></div>
<svg class="a" style="left:0px;top:182px;" width="1920" height="825" viewBox="0 0 1920 825"><g transform="translate(0 -182)"><g transform="translate(0 0)" fill="none" stroke="#1e1e1e" stroke-width="1.1"><path d="M462 314 Q467 309 472 315 Q474 340 473.8 363 Q470 380 470.5 392 Q472 400 475 405 L462 409 Q456 402 457.6 394 Q459 370 459.4 345 Q460 325 462 314z"/><path d="M460 318 Q458 370 459.5 394 M468 319 Q471 360 468 392"/><path d="M458.0 394 L471.0 392.0" stroke-width="0.8"/><path d="M458.3 396 L471.5 394.3" stroke-width="0.8"/><path d="M458.6 398 L472.0 396.6" stroke-width="0.8"/><path d="M458.9 400 L472.5 398.9" stroke-width="0.8"/><path d="M459.2 402 L473.0 401.2" stroke-width="0.8"/><path d="M459.5 404 L473.5 403.5" stroke-width="0.8"/><path d="M461.2 410 Q480 400 500 399.5 Q530 400 546 405 Q549 410 545 412 Q520 416 500 419 Q480 421 466 417 Q460 414 461.2 410z"/><path d="M464 412 Q480 416 500 415 Q525 412 545 410"/><path d="M503 419 Q509 424 513 419 Q516 424 521 421 Q521 416 513 416" stroke-width="0.9"/><path d="M492.8 419 V435.5 M500.9 419 V435.5 M493 428 L505 419 M494 432 L508 420"/><rect x="490.1" y="435.5" width="12.6" height="36"/><path d="M446 471 H549 M446 476 H480 V478.5 H510 V476 H549"/><path d="M446 471 Q441 473 443.5 477 M549 471 Q553 473 551 477"/><circle cx="447.6" cy="480" r="3.6"/><circle cx="495.7" cy="480.6" r="3.6"/><circle cx="547.3" cy="480" r="3.6"/><rect x="493" y="470" width="5" height="7"/></g><g fill="none" stroke="#1e1e1e" stroke-width="1.1"><path d="M560.5 384 L561.6 347 L586 262 Q589 254.5 597 254 H610 Q617 254.5 620 262 L646.1 347 L647.3 384"/><rect x="597.5" y="252" width="12.1" height="12.7" fill="#fff"/><path d="M592 265.8 H614 Q619 266 618 272 L615 283 Q614 286.7 610 286.7 H595 Q591 286.7 590.6 283 L588.8 272 Q588 266 592 265.8z"/><path d="M569.7 384 V346 L587 311 Q589 307.5 593 307.5 H614 Q618 307.5 620 311 L636.9 346 V384"/><path d="M592 314.5 H616" stroke-width="1"/><path d="M588 322.6 H619" stroke-width="1"/><path d="M584 332.5 H623" stroke-width="1"/><path d="M581 342.2 H626" stroke-width="1"/><path d="M577.5 351.5 H629" stroke-width="1"/><path d="M577.5 360.8 H629" stroke-width="1"/><path d="M577.5 371.2 H629" stroke-width="1"/><path d="M577.5 378.8 H629" stroke-width="1"/><rect x="556.2" y="339" width="4" height="13" rx="2"/><rect x="646.4" y="339" width="4" height="13" rx="2"/><path d="M544.3 390.9 V362 Q546 356 551 357.3 Q557 360 560 368 V390.9z M544.3 380 H560 M548 381 V391 M555 382 H560 V388"/><path d="M663.5 390.9 V362 Q662 356 657 357.3 Q651 360 648 368 V390.9z M663.5 380 H648 M659.5 381 V391 M653 382 H648 V388"/><rect x="562.8" y="383.9" width="37" height="30.1" rx="2.5" fill="#fff"/><rect x="606.8" y="383.9" width="37" height="30.1" rx="2.5" fill="#fff"/><path d="M562.8 391 H599.8 M606.8 391 H643.8"/><path d="M559.3 389.7 V421 H648.4 V389.7 M562 417 H646"/><rect x="547.7" y="396.7" width="9.3" height="27.7"/><rect x="650.8" y="396.7" width="9.3" height="27.7"/><path d="M557 403 H560 V410 H557 M650.8 403 H648 V410 H650.8"/><path d="M576.7 421 V433.7 M630 421 V433.7"/><path d="M577 423.0 H630" stroke-width="0.7"/><path d="M577 424.6 H630" stroke-width="0.7"/><path d="M577 426.2 H630" stroke-width="0.7"/><path d="M577 427.8 H630" stroke-width="0.7"/><path d="M577 429.4 H630" stroke-width="0.7"/><path d="M577 431.0 H630" stroke-width="0.7"/><path d="M577 432.6 H630" stroke-width="0.7"/><path d="M574.4 433.7 V443 Q553 446 552.4 455 Q553 464 568.6 468.4 H638 Q655 464 655.4 455 Q654 446 632.2 443 V433.7"/><path d="M578 441 Q603 448 629 441 M566 450 Q585 456 598 455 M608 455 Q622 456 642 450 M572 461 L590 458 M617 458 L636 461" stroke-width="1"/><path d="M568.6 468.4 V472 H638 V468.4 M568.6 472 L557 482.3 H650.8 L638 472"/><path d="M544.3 484.6 H663.5" stroke-width="1.3"/></g><g transform="translate(0 0)" fill="none" stroke="#1e1e1e" stroke-width="1.1"><rect x="680.6" y="348.3" width="85.4" height="31.2"/><path d="M680.6 352.2 H766"/><path d="M680.6 371.6 H728 M680.6 375.9 H728"/><rect x="728" y="352.2" width="38" height="32.3" fill="#fff"/><path d="M705.7 384.5 V477 M743 384.5 V477"/><path d="M705.7 469.8 H680.6 V477 H766 V469.8 H743 M691.4 469.8 V477 M755.2 469.8 V477"/><circle cx="685" cy="481.5" r="3.3" stroke-width="1.8"/><circle cx="761.7" cy="481.5" r="3.3" stroke-width="1.8"/><rect x="733.5" y="359.5" width="2.5" height="3.5" stroke-width="1.5"/><ellipse cx="740.0" cy="361.5" rx="1.5" ry="1.9" stroke-width="1.5"/><ellipse cx="745.2" cy="361.5" rx="1.5" ry="1.9" stroke-width="1.5"/><ellipse cx="750.4" cy="361.5" rx="1.5" ry="1.9" stroke-width="1.5"/><ellipse cx="755.6" cy="361.5" rx="1.5" ry="1.9" stroke-width="1.5"/><rect x="733" y="365.8" width="6.4" height="4.3" stroke-width="0.9"/><circle cx="741.6" cy="374.4" r="1.6" stroke-width="1.5"/><path d="M692.2 356 V392 M694.8 356 V392" stroke-width="0.9"/><path d="M692.2 356 Q693.5 352 694.8 356" stroke-width="0.9"/><path d="M692.2 390 H694.8" stroke-width="0.9"/><path d="M693.5 392 C688.5 408 683.5 432 686.5 446 Q689.5 452 695.5 451 C702.5 450 704.5 444 702.5 432 C700.5 418 696.5 402 694.0 392" stroke-width="1.7"/><path d="M702.3000000000001 356 V392 M704.9 356 V392" stroke-width="0.9"/><path d="M702.3000000000001 356 Q703.6 352 704.9 356" stroke-width="0.9"/><path d="M702.3000000000001 390 H704.9" stroke-width="0.9"/><path d="M703.6 392 C698.6 408 693.6 432 696.6 446 Q699.6 452 705.6 451 C712.6 450 714.6 444 712.6 432 C710.6 418 706.6 402 704.1 392" stroke-width="1.7"/><path d="M710.2 356 V392 M712.8 356 V392" stroke-width="0.9"/><path d="M710.2 356 Q711.5 352 712.8 356" stroke-width="0.9"/><path d="M710.2 390 H712.8" stroke-width="0.9"/><path d="M711.5 392 C706.5 408 701.5 432 704.5 446 Q707.5 452 713.5 451 C720.5 450 722.5 444 720.5 432 C718.5 418 714.5 402 712.0 392" stroke-width="1.7"/><path d="M718.0 356 V392 M720.5999999999999 356 V392" stroke-width="0.9"/><path d="M718.0 356 Q719.3 352 720.5999999999999 356" stroke-width="0.9"/><path d="M718.0 390 H720.5999999999999" stroke-width="0.9"/><path d="M719.3 392 C714.3 408 709.3 432 712.3 446 Q715.3 452 721.3 451 C728.3 450 730.3 444 728.3 432 C726.3 418 722.3 402 719.8 392" stroke-width="1.7"/></g><g transform="translate(426 1.5)" fill="none" stroke="#1e1e1e" stroke-width="1.1"><path d="M462 314 Q467 309 472 315 Q474 340 473.8 363 Q470 380 470.5 392 Q472 400 475 405 L462 409 Q456 402 457.6 394 Q459 370 459.4 345 Q460 325 462 314z"/><path d="M460 318 Q458 370 459.5 394 M468 319 Q471 360 468 392"/><path d="M458.0 394 L471.0 392.0" stroke-width="0.8"/><path d="M458.3 396 L471.5 394.3" stroke-width="0.8"/><path d="M458.6 398 L472.0 396.6" stroke-width="0.8"/><path d="M458.9 400 L472.5 398.9" stroke-width="0.8"/><path d="M459.2 402 L473.0 401.2" stroke-width="0.8"/><path d="M459.5 404 L473.5 403.5" stroke-width="0.8"/><path d="M461.2 410 Q480 400 500 399.5 Q530 400 546 405 Q549 410 545 412 Q520 416 500 419 Q480 421 466 417 Q460 414 461.2 410z"/><path d="M464 412 Q480 416 500 415 Q525 412 545 410"/><path d="M503 419 Q509 424 513 419 Q516 424 521 421 Q521 416 513 416" stroke-width="0.9"/><path d="M492.8 419 V435.5 M500.9 419 V435.5 M493 428 L505 419 M494 432 L508 420"/><rect x="490.1" y="435.5" width="12.6" height="36"/><path d="M446 471 H549 M446 476 H480 V478.5 H510 V476 H549"/><path d="M446 471 Q441 473 443.5 477 M549 471 Q553 473 551 477"/><circle cx="447.6" cy="480" r="3.6"/><circle cx="495.7" cy="480.6" r="3.6"/><circle cx="547.3" cy="480" r="3.6"/><rect x="493" y="470" width="5" height="7"/></g><g transform="translate(1749.4 1.6) scale(-1 1)" fill="none" stroke="#1e1e1e" stroke-width="1.1"><rect x="680.6" y="348.3" width="85.4" height="31.2"/><path d="M680.6 352.2 H766"/><path d="M680.6 371.6 H728 M680.6 375.9 H728"/><rect x="728" y="352.2" width="38" height="32.3" fill="#fff"/><path d="M705.7 384.5 V477 M743 384.5 V477"/><path d="M705.7 469.8 H680.6 V477 H766 V469.8 H743 M691.4 469.8 V477 M755.2 469.8 V477"/><circle cx="685" cy="481.5" r="3.3" stroke-width="1.8"/><circle cx="761.7" cy="481.5" r="3.3" stroke-width="1.8"/><rect x="733.5" y="359.5" width="2.5" height="3.5" stroke-width="1.5"/><ellipse cx="740.0" cy="361.5" rx="1.5" ry="1.9" stroke-width="1.5"/><ellipse cx="745.2" cy="361.5" rx="1.5" ry="1.9" stroke-width="1.5"/><ellipse cx="750.4" cy="361.5" rx="1.5" ry="1.9" stroke-width="1.5"/><ellipse cx="755.6" cy="361.5" rx="1.5" ry="1.9" stroke-width="1.5"/><rect x="733" y="365.8" width="6.4" height="4.3" stroke-width="0.9"/><circle cx="741.6" cy="374.4" r="1.6" stroke-width="1.5"/><path d="M692.2 356 V392 M694.8 356 V392" stroke-width="0.9"/><path d="M692.2 356 Q693.5 352 694.8 356" stroke-width="0.9"/><path d="M692.2 390 H694.8" stroke-width="0.9"/><path d="M693.5 392 C688.5 408 683.5 432 686.5 446 Q689.5 452 695.5 451 C702.5 450 704.5 444 702.5 432 C700.5 418 696.5 402 694.0 392" stroke-width="1.7"/><path d="M702.3000000000001 356 V392 M704.9 356 V392" stroke-width="0.9"/><path d="M702.3000000000001 356 Q703.6 352 704.9 356" stroke-width="0.9"/><path d="M702.3000000000001 390 H704.9" stroke-width="0.9"/><path d="M703.6 392 C698.6 408 693.6 432 696.6 446 Q699.6 452 705.6 451 C712.6 450 714.6 444 712.6 432 C710.6 418 706.6 402 704.1 392" stroke-width="1.7"/><path d="M710.2 356 V392 M712.8 356 V392" stroke-width="0.9"/><path d="M710.2 356 Q711.5 352 712.8 356" stroke-width="0.9"/><path d="M710.2 390 H712.8" stroke-width="0.9"/><path d="M711.5 392 C706.5 408 701.5 432 704.5 446 Q707.5 452 713.5 451 C720.5 450 722.5 444 720.5 432 C718.5 418 714.5 402 712.0 392" stroke-width="1.7"/><path d="M718.0 356 V392 M720.5999999999999 356 V392" stroke-width="0.9"/><path d="M718.0 356 Q719.3 352 720.5999999999999 356" stroke-width="0.9"/><path d="M718.0 390 H720.5999999999999" stroke-width="0.9"/><path d="M719.3 392 C714.3 408 709.3 432 712.3 446 Q715.3 452 721.3 451 C728.3 450 730.3 444 728.3 432 C726.3 418 722.3 402 719.8 392" stroke-width="1.7"/></g><g fill="none" stroke="#1e1e1e" stroke-width="1.1"><path d="M1263.8 404.8 L1311.2 254.3 Q1314 250 1319 251.5 Q1325 254 1324 261.2 L1274.2 383.9"/><ellipse cx="1294" cy="271" rx="9.5" ry="15" transform="rotate(25 1294 271)"/><path d="M1300 283 L1316 258 M1302 285 L1318 260" stroke-width="0.9"/><path d="M1310 262 Q1300 285 1286 300 Q1265 318 1252 342 Q1244 358 1245 372"/><path d="M1201 334 L1252 354 Q1246 363 1249 373 Q1255 385 1266 382 Q1277 377 1278 364 Q1278 354 1270 350 L1202 327 Q1196 329 1201 334z" fill="#fff"/><circle cx="1264.2" cy="373" r="3.8"/><circle cx="1264.2" cy="373" r="6.5" stroke-width="0.9"/><path d="M1167.7 390 Q1170 375 1188 372 Q1195 372.5 1200 373.5 L1240 372.5 Q1255 377 1260 383 M1173.4 402.4 Q1168 398 1167.7 390 M1173.4 402.4 Q1171 392 1178 391 Q1210 386 1238 381 Q1250 382 1262 392 L1265 404.8"/><path d="M1171 404.6 H1300.8" stroke-width="1.2"/><path d="M1263.8 404.8 L1277.6 379.3 Q1292 384 1296.2 404.8"/><text x="1271" y="403" font-family="Liberation Sans" font-size="6" font-weight="bold" fill="#111" stroke="none">90°</text><path d="M1117.9 399 V382 Q1133 373 1150 372.3 L1164 373 V399 M1117.9 399 Q1140 402 1164 399"/><path d="M1094.7 396 V399 H1117.9 M1094.7 393 H1117.9"/><path d="M1064.6 388 Q1072 383.5 1092 382.5 Q1095 390 1094.7 402 H1075 Q1064 397 1064.6 388z"/><path d="M1073 403 L1182.7 400"/><path d="M1081 406 Q1078 410 1083 412 L1170 411.7 L1169 404.5 M1081 406 H1170"/><circle cx="1085.5" cy="408.8" r="1.5"/><path d="M1169 404.5 L1183 405 L1172 413z"/><circle cx="1175" cy="407.5" r="1.3"/><path d="M1205.9 404.8 Q1198 420 1196.6 448.7 M1255.6 404.8 Q1250 425 1249.9 448.7"/><path d="M1204.6 408.0 H1254.8" stroke-width="0.8"/><path d="M1203.4 411.2 H1254.1" stroke-width="0.8"/><path d="M1202.3 414.4 H1253.4" stroke-width="0.8"/><path d="M1201.3 417.6 H1252.8" stroke-width="0.8"/><path d="M1200.4 420.8 H1252.2" stroke-width="0.8"/><path d="M1199.6 424.0 H1251.7" stroke-width="0.8"/><path d="M1198.8 427.2 H1251.3" stroke-width="0.8"/><path d="M1198.2 430.4 H1250.9" stroke-width="0.8"/><path d="M1197.7 433.6 H1250.6" stroke-width="0.8"/><path d="M1197.3 436.8 H1250.3" stroke-width="0.8"/><path d="M1197.0 440.0 H1250.1" stroke-width="0.8"/><path d="M1196.8 443.2 H1250.0" stroke-width="0.8"/><path d="M1196.6 446.4 H1249.9" stroke-width="0.8"/><path d="M1196.6 448.7 V455 M1249.9 448.7 V451"/><path d="M1173.4 456 L1268.4 450 L1270.7 462.6 L1256.8 473.1 L1198.9 476.5 L1173.4 465z"/><path d="M1194.3 476.5 H1261.4 V476.5 M1168.8 487 H1276.5 L1261.4 476.5 M1168.8 487 L1194.3 476.5"/><path d="M1162 467.5 H1167 V487 H1162 M1162 467.5 V470.5 H1167 M1162 484 V487 M1167 478 H1194"/></g></g></svg>
<svg class="a" style="left:0px;top:182px;" width="1920" height="825" viewBox="0 0 1920 825"><g transform="translate(0 -182)"><g fill="none" stroke="#1e1e1e" stroke-width="1.1"><path d="M921.5 648.7 A161.3 161.3 0 1 0 921.5 876.9" stroke-width="1.5" stroke-dasharray="1.7 1.1"/><circle cx="970.3" cy="763.3" r="162.8" stroke-width="1.5" stroke-dasharray="1.7 1.1"/><path d="M895 596.5 H1102.7 V930.7 H895 V925.7 H1097.3 V601.7 H895z" stroke-width="1.1"/><path d="M610 763.75 H1206" stroke-width="1.1" stroke-dasharray="7.5 2 1.2 2"/><rect x="808.6" y="723.1" width="28.9" height="36" rx="3.5" fill="#fff"/><path d="M814 728.6 H832 M814 754.1 H832"/><path d="M837.5 736.9 H862.5 M837.5 745.8000000000001 H862.5 M907.8 736.9 H911.25 M907.8 745.8000000000001 H911.25"/><rect x="862.5" y="723.1" width="45.3" height="36" rx="3.5" fill="#fff"/><path d="M868 728.6 H903 M868 754.1 H903"/><rect x="808.6" y="768.4" width="28.9" height="36" rx="3.5" fill="#fff"/><path d="M814 773.9 H832 M814 799.4 H832"/><path d="M837.5 782.1999999999999 H862.5 M837.5 791.1 H862.5 M907.8 782.1999999999999 H911.25 M907.8 791.1 H911.25"/><rect x="862.5" y="768.4" width="45.3" height="36" rx="3.5" fill="#fff"/><path d="M868 773.9 H903 M868 799.4 H903"/><rect x="940.6" y="705.9" width="81.3" height="11" rx="2.5"/><rect x="940.6" y="810.6" width="81.3" height="11" rx="2.5"/><path d="M938.3 723 V719 Q938.3 717.7 941 717.7 H1013 Q1015.6 717.7 1015.6 720 V727 M938.3 804.5 V808.5 Q938.3 809.8 941 809.8 H1013 Q1015.6 809.8 1015.6 807.5 V800.5"/><path d="M919 723.1 H975 Q985.9 723.1 985.9 734 V793.5 Q985.9 804.4 975 804.4 H919 Q911.25 804.4 911.25 796.6 V730.9 Q911.25 723.1 919 723.1z" fill="#fff"/><path d="M991 723.9 L1063 735.9 Q1065.6 736.4 1065.6 739 V787.7 Q1065.6 790.3 1063 790.8 L991 803.6 Q986.7 804 986.7 799 V728.5 Q986.7 723.5 991 723.9z" fill="#fff"/><circle cx="971.1" cy="763.75" r="50.2"/><rect x="1031.25" y="741.1" width="20.35" height="45.3" rx="3"/><path d="M1036 748.1 H1047.7 M1036 779.4 H1047.7"/><path d="M970.8 740.3 V745.8 M970.8 782.5 V788 M1088 741.1 V745 M1088 782 V786"/><path d="M611 763.75 H957 M988 763.75 H1206" stroke-width="1.1" stroke-dasharray="7.5 2 1.2 2"/><g fill="#fff" stroke="#111" stroke-width="2.3"><ellipse cx="965" cy="765.4" rx="4.9" ry="8.1"/><ellipse cx="979.3" cy="765.4" rx="4.9" ry="8.1"/></g></g><g transform="translate(667.2 682.4) rotate(-45.3)" fill="none" stroke="#1e1e1e" stroke-width="1.1"><rect x="0" y="0" width="84" height="56"/><path d="M2 -1.8 H82 M3 -1 Q6 -7 14 -5.5 H70 Q78 -7 81 -1" stroke-width="0.9"/><path d="M59 0 V56 M59 53.5 H84 M81.5 0 V53.5 M84 56 V77 H76"/><path d="M52.5 56 V70 H84"/><path d="M0 56 V76 H8 V56"/><rect x="72" y="72" width="7" height="7" transform="rotate(15 75.5 75.5)"/><rect x="-3" y="72" width="7" height="7" transform="rotate(15 0.5 75.5)"/><circle cx="10.8" cy="60.5" r="1.9"/><circle cx="22.7" cy="60.5" r="1.9"/><circle cx="34.6" cy="60.5" r="1.9"/><circle cx="46.5" cy="60.5" r="1.9"/></g><g fill="none" stroke="#1e1e1e" stroke-width="1.1"><path d="M694.3 793.0 L704.5 804.0 M697.5 790.0 L707.7 801.0" stroke-width="1"/><rect x="690.9" y="786.5" width="10" height="10" rx="1.5" fill="#fff" transform="rotate(15 695.9 791.5)"/><circle cx="695.9" cy="792.5" r="2.2" stroke-width="0.9"/><path d="M761.1 782.0 L754.8 799.3 M764.3 779.0 L758.0 796.3" stroke-width="1"/><rect x="757.7" y="775.5" width="10" height="10" rx="1.5" fill="#fff" transform="rotate(15 762.7 780.5)"/><circle cx="762.7" cy="781.5" r="2.2" stroke-width="0.9"/><path d="M791.0 844.1 L784.4 846.5 M794.2 841.1 L787.6 843.5" stroke-width="1"/><rect x="787.6" y="837.6" width="10" height="10" rx="1.5" fill="#fff" transform="rotate(15 792.6 842.6)"/><circle cx="792.6" cy="843.6" r="2.2" stroke-width="0.9"/><path d="M690.3 822.9 Q688 812 696 803 L718 787 Q728 781 740 786 Q770 800 786 840 Q789 850 780 857 L752 880 Q744 886 736 880 Q712 866 700 848 Q692 836 690.3 822.9z" fill="#fff"/><path d="M694 829 Q702 860 738 884" stroke-width="0.9"/><path d="M676 827 L698 803 Q703 799 706 804 L684 831 Q680 834 676 827z" fill="#fff"/><path d="M741 892 L763 870 Q768 866 770 872 L749 896 Q744 899 741 892z" fill="#fff"/><circle cx="678.5" cy="828.5" r="1.8" stroke-width="0.9"/><circle cx="743.5" cy="893.5" r="1.8" stroke-width="0.9"/><path d="M671 834 Q673 829 679 831 Q688 832 692 836 Q700 862 722 878 Q736 886 740 888 Q743 894 740 900 Q737 905 731 903 Q700 892 684 868 Q672 850 671 834z" fill="#fff"/></g></g></svg>
<svg class="a" style="left:40px;top:795px;" width="140" height="181" viewBox="0 0 140 181">
<defs>
<linearGradient id="gblue" x1="0" y1="0" x2="1" y2="1"><stop offset="0" stop-color="#1d3f78"/><stop offset="0.6" stop-color="#23497f"/><stop offset="1" stop-color="#3a5f92"/></linearGradient>
<linearGradient id="gyel" x1="0" y1="0" x2="1" y2="0.3"><stop offset="0" stop-color="#f7efb0"/><stop offset="0.45" stop-color="#f2cf2a"/><stop offset="1" stop-color="#f4e48a"/></linearGradient>
<linearGradient id="gfold" x1="0" y1="0" x2="1" y2="1"><stop offset="0" stop-color="#5a7fb5"/><stop offset="1" stop-color="#213f73"/></linearGradient>
</defs>
<path d="M0.5 0.5 H88 Q96 1 100 8 L138.5 52 Q139 54 139 58 V180 H0.5z" fill="#ffffff" stroke="#e6e6e6" stroke-width="1"/>
<path d="M1 1 H88 L139 56 V127 L43 96 H1z" fill="url(#gblue)"/>
<path d="M1 96 H43 L139 127 V179.5 H1z" fill="url(#gyel)"/>
<path d="M88 1 Q98 2 104 14 L139 56 Q120 46 104 46 Q96 30 88 1z" fill="url(#gfold)"/>
<rect x="39" y="1" width="4" height="95" fill="#ffffff"/>
<rect x="1" y="57" width="138" height="4.5" fill="#ffffff"/>
<rect x="23.5" y="42.5" width="35" height="33" fill="#ffffff"/>
<rect x="27.5" y="46.5" width="27" height="25" fill="#244b82"/>
<rect x="39.5" y="57.5" width="3" height="3" fill="#ffffff"/>
<text x="0" y="0" font-family="Liberation Sans" font-weight="bold" font-size="41" fill="#111" transform="translate(37.5 168.5) scale(1.08 1)">.dwg</text>
</svg>
<svg class="a" style="left:0px;top:182px;" width="1920" height="825" viewBox="0 0 1920 825"><g transform="translate(0 -182)"><g transform="translate(1690 176) scale(0.18519)" stroke="#2b2319" stroke-width="6" stroke-linejoin="round">
<path d="M360 820 L330 850 Q300 890 270 930 L235 965 Q215 995 240 1010 L310 1000 L370 965 L400 905 L440 850z" fill="#2f8fe0"/>
<path d="M520 820 L580 840 Q615 885 640 930 L690 990 Q712 1035 688 1045 L640 1025 L600 965 L565 905 L510 850z" fill="#2f8fe0"/>
<path d="M280 905 L355 945 L340 975 L265 940z" fill="#4a4a4a"/>
<path d="M600 935 L668 915 L680 955 L612 975z" fill="#4a4a4a"/>
<path d="M300 600 Q330 555 430 530 L600 540 Q680 520 735 470 L775 530 Q765 610 700 645 L625 650 L612 830 L395 835 L380 705 L300 660z" fill="#2f8fe0"/>
<path d="M490 570 L520 570 L525 830 L495 830z" fill="#7a7a7a" stroke-width="3"/>
<path d="M395 800 L612 800 L612 830 L395 835z" fill="#6a6a6a" stroke-width="3"/>
<path d="M640 555 L690 540 L700 580 L655 595z" fill="#ffffff" stroke-width="3"/>
<path d="M55 728 L912 402 Q938 396 942 420 L70 765 Q48 770 55 728z" fill="#b5762f"/>
<ellipse cx="255" cy="690" rx="36" ry="32" fill="#f4c090"/>
<ellipse cx="735" cy="495" rx="34" ry="34" fill="#f4c090"/>
<circle cx="738" cy="365" r="26" fill="#f4c090"/>
<path d="M310 290 Q300 420 380 485 Q450 535 520 525 Q640 510 700 430 Q735 370 722 285z" fill="#f4c090"/>
<ellipse cx="418" cy="345" rx="52" ry="32" fill="#ffffff" stroke-width="5"/>
<ellipse cx="578" cy="345" rx="52" ry="32" fill="#ffffff" stroke-width="5"/>
<circle cx="425" cy="340" r="20" fill="#4aa3e6" stroke="none"/><circle cx="572" cy="340" r="20" fill="#4aa3e6" stroke="none"/>
<circle cx="425" cy="340" r="8" fill="#1a2a3a" stroke="none"/><circle cx="572" cy="340" r="8" fill="#1a2a3a" stroke="none"/>
<path d="M455 445 Q505 480 565 440" fill="none" stroke-width="7"/>
<path d="M470 400 Q490 420 505 400" fill="none" stroke-width="5"/>
<path d="M325 235 Q318 165 345 118 L372 138 Q388 85 428 58 L448 92 Q488 42 540 28 L552 62 Q585 28 612 20 L614 66 Q658 52 692 68 L680 112 Q716 132 712 178 L722 235z" fill="#f5b818"/>
<path d="M380 220 L410 140 M450 220 L490 110 M520 220 L560 90 M600 220 L630 120 M660 220 L690 160" stroke="#e8860a" stroke-width="14" fill="none"/>
<path d="M298 222 Q500 200 722 222 L726 302 Q500 290 304 302z" fill="#4a4a4a"/>
<path d="M722 232 Q795 195 852 262 Q805 250 790 290 L805 362 Q760 325 735 292z" fill="#333333"/>
<path d="M870 262 Q902 248 922 288 Q1000 298 1036 350 Q1046 402 1002 440 L1015 560 Q1004 585 982 562 L960 472 Q928 422 900 402 Q868 332 870 262z" fill="#f5c01a"/>
<path d="M920 300 Q980 320 1000 380" stroke="#e8a010" stroke-width="12" fill="none"/>
</g></g></svg>
<svg class="a" style="left:0px;top:182px;" width="1920" height="825" viewBox="0 0 1920 825"><g transform="translate(0 -182)"><g transform="translate(1645 350) scale(0.14327)" fill="none" stroke-linecap="round" stroke-linejoin="round">
<g stroke="#ffffff" stroke-width="72"><path d="M100 300 L112 85 Q240 80 290 180 Q270 215 135 212"/>
<path d="M312 322 L320 372"/>
<path d="M470 250 Q390 245 385 285 Q400 320 470 350 Q495 390 455 420 Q410 425 365 395"/>
<path d="M558 232 L572 432"/>
<path d="M652 335 L662 432"/>
<path d="M722 272 L742 442 M805 368 L745 398 L870 450"/>
<path d="M945 410 L932 255 L1022 335 L1112 232 L1162 432 M1055 305 L1190 300"/>
<path d="M1240 395 L1245 410"/>
<path d="M1335 420 L1352 335 Q1400 300 1425 330 L1442 402 M1440 335 Q1480 300 1530 305 L1545 385"/>
<path d="M1685 295 Q1610 290 1605 340 Q1640 375 1700 340 L1722 300 L1732 370"/>
<path d="M1765 300 L1782 368 M1778 305 Q1820 210 1880 170"/></g>
<g stroke="#1e8fdc" stroke-width="37"><path d="M100 300 L112 85 Q240 80 290 180 Q270 215 135 212"/>
<path d="M312 322 L320 372"/>
<path d="M470 250 Q390 245 385 285 Q400 320 470 350 Q495 390 455 420 Q410 425 365 395"/>
<path d="M558 232 L572 432"/>
<path d="M652 335 L662 432"/>
<path d="M722 272 L742 442 M805 368 L745 398 L870 450"/>
<path d="M945 410 L932 255 L1022 335 L1112 232 L1162 432 M1055 305 L1190 300"/>
<path d="M1240 395 L1245 410"/>
<path d="M1335 420 L1352 335 Q1400 300 1425 330 L1442 402 M1440 335 Q1480 300 1530 305 L1545 385"/>
<path d="M1685 295 Q1610 290 1605 340 Q1640 375 1700 340 L1722 300 L1732 370"/>
<path d="M1765 300 L1782 368 M1778 305 Q1820 210 1880 170"/></g>
<circle cx="622" cy="285" r="12" fill="#777"/>
</g></g></svg>
</body></html>
